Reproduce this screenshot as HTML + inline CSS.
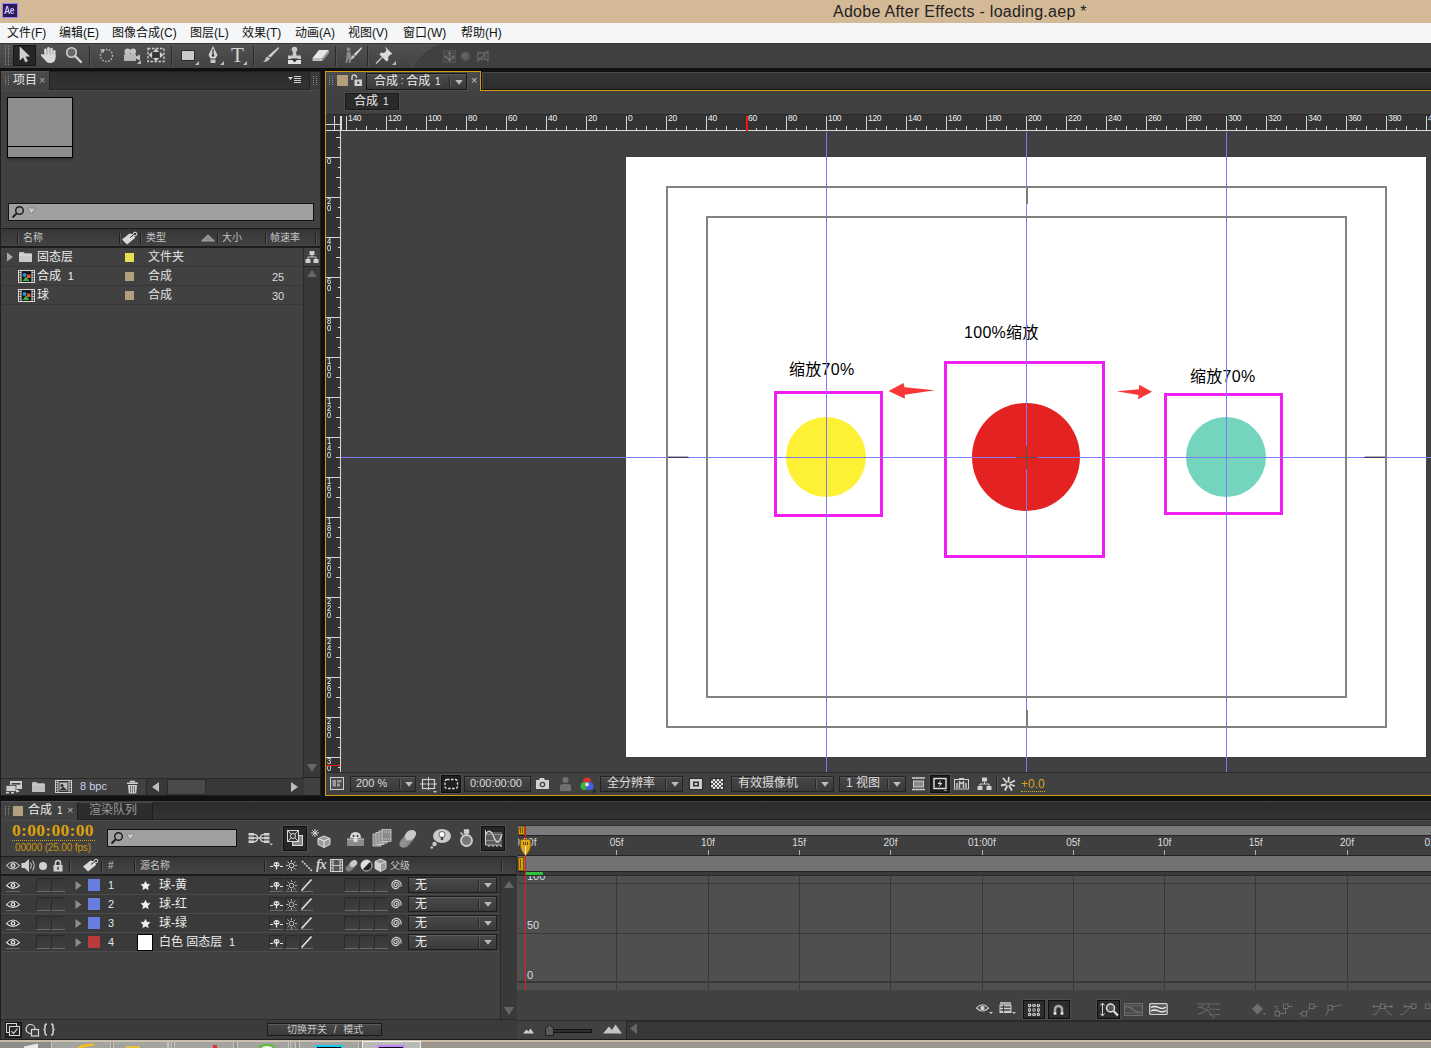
<!DOCTYPE html><html><head><meta charset="utf-8"><title>Adobe After Effects - loading.aep *</title><style>
*{box-sizing:border-box;margin:0;padding:0}
html,body{width:1431px;height:1048px;overflow:hidden;background:#111}
body{font-family:"Liberation Sans","Noto Sans CJK SC",sans-serif;font-size:12px;color:#d6d6d6;position:relative}
.a{position:absolute}
.t{position:absolute;white-space:nowrap;line-height:14px}
</style></head><body>
<div class="a" style="left:0px;top:0px;width:1431px;height:23px;background:#d4b997;"></div>
<div class="a" style="left:2px;top:3px;width:16px;height:15px;background:#2d1b59;border:1px solid #9f86ee;box-shadow:0 0 1px #b9a4ff"></div>
<div class="t" style="left:4px;top:4px;color:#cdbcff;font-size:10px;font-weight:bold;letter-spacing:-0.6px;line-height:13px;transform:scaleX(.88);transform-origin:0 0">Ae</div>
<div class="t" style="left:833px;top:3px;color:#222;font-size:16px;line-height:18px;letter-spacing:0.27px">Adobe After Effects - loading.aep *</div>
<div class="a" style="left:0px;top:23px;width:1431px;height:20px;background:#f5f6f7;"></div>
<div class="t" style="left:7px;top:26px;color:#111;font-size:12px;">文件(F)</div>
<div class="t" style="left:59px;top:26px;color:#111;font-size:12px;">编辑(E)</div>
<div class="t" style="left:112px;top:26px;color:#111;font-size:12px;">图像合成(C)</div>
<div class="t" style="left:190px;top:26px;color:#111;font-size:12px;">图层(L)</div>
<div class="t" style="left:242px;top:26px;color:#111;font-size:12px;">效果(T)</div>
<div class="t" style="left:295px;top:26px;color:#111;font-size:12px;">动画(A)</div>
<div class="t" style="left:348px;top:26px;color:#111;font-size:12px;">视图(V)</div>
<div class="t" style="left:403px;top:26px;color:#111;font-size:12px;">窗口(W)</div>
<div class="t" style="left:461px;top:26px;color:#111;font-size:12px;">帮助(H)</div>
<div class="a" style="left:0px;top:43px;width:1431px;height:25px;background:#404040;"></div>
<svg class="a" style="left:0;top:43px" width="460" height="25"><defs><linearGradient id="tbg" x1="0" y1="0" x2="0" y2="1"><stop offset="0" stop-color="#515151"/><stop offset="1" stop-color="#424242"/></linearGradient></defs><path d="M0 0H440Q422 6 411 25H0Z" fill="url(#tbg)"/><path d="M440 .5Q422 6.500 411 25" fill="none" stroke="#555" stroke-width="1"/></svg>
<div class="a" style="left:0px;top:43px;width:1431px;height:1px;background:#383838;"></div>
<div class="a" style="left:0px;top:68px;width:1431px;height:3px;background:#101010;"></div>
<div class="a" style="left:5px;top:45px;width:4px;height:21px;background:repeating-linear-gradient(#0000 0 1px,#8a8a8a 1px 2px);-webkit-mask:linear-gradient(90deg,#000 0 1px,#0000 1px 3px,#000 3px 4px);mask:linear-gradient(90deg,#000 0 1px,#0000 1px 3px,#000 3px 4px)"></div>
<div class="a" style="left:13px;top:45px;width:23px;height:21px;background:#262626;border:1px solid #151515"></div>
<svg class="a" style="left:18px;top:46px" width="12" height="17"><path d="M2 1v13l3.200-3l2.300 5l2-1l-2.300-4.800h4.300z" fill="#cfcfcf" stroke="#e8e8e8" stroke-width=".5"/></svg>
<svg class="a" style="left:40px;top:46px" width="17" height="18"><g fill="#d8d8d8"><rect x="4.200" y="2.500" width="2.600" height="9" rx="1.300"/><rect x="7.200" y="1" width="2.600" height="10" rx="1.300"/><rect x="10.200" y="1.800" width="2.600" height="9.500" rx="1.300"/><rect x="13.100" y="4" width="2.400" height="8" rx="1.200"/><path d="M4.200 8.500h11.300v3q0 5-5 5.500h-1.500q-2.500-.3-4-3L1.200 10q-.7-1.300.3-1.900t1.900.5l.8 1.200z"/></g></svg>
<svg class="a" style="left:65px;top:46px" width="18" height="18"><circle cx="6.500" cy="6.500" r="4.800" fill="#6a6a6a" stroke="#cfcfcf" stroke-width="1.600"/><path d="M10 10l6 6" stroke="#cfcfcf" stroke-width="2.400" stroke-linecap="round"/></svg>
<div class="a" style="left:89px;top:46px;width:1px;height:20px;background:#2a2a2a;"></div>
<div class="a" style="left:90px;top:46px;width:1px;height:20px;background:#555;"></div>
<svg class="a" style="left:98px;top:47px" width="17" height="16"><circle cx="8.500" cy="8.500" r="6" fill="none" stroke="#bdbdbd" stroke-width="1.400" stroke-dasharray="1.500 1.500"/><path d="M2 2.500l4.500-.5l-1 4z" fill="#bdbdbd"/></svg>
<svg class="a" style="left:122px;top:47px" width="20" height="18"><circle cx="5.500" cy="4.500" r="3" fill="#c4c4c4"/><circle cx="11" cy="4.500" r="3" fill="#c4c4c4"/><rect x="2" y="7" width="12" height="7" rx="1" fill="#b8b8b8"/><path d="M14 9.500l4-2v6l-4-2z" fill="#c4c4c4"/><path d="M19 13v4h-4z" fill="#bbb"/></svg>
<svg class="a" style="left:147px;top:47px" width="18" height="16"><rect x="1" y="1.500" width="16" height="13" fill="none" stroke="#cfcfcf" stroke-width="1.300" stroke-dasharray="2.500 1.500"/><path d="M9 1.500l-3 3.500h6zM9 14.500l-3-3.500h6zM1.500 8l3.500-3v6zM16.500 8l-3.500-3v6z" fill="#cfcfcf"/><rect x="6" y="5.500" width="6" height="5" fill="#333"/></svg>
<div class="a" style="left:171px;top:46px;width:1px;height:20px;background:#2a2a2a;"></div>
<div class="a" style="left:172px;top:46px;width:1px;height:20px;background:#555;"></div>
<svg class="a" style="left:180px;top:48px" width="20" height="18"><rect x="1.500" y="2.500" width="13" height="10" fill="#c9c9c9" stroke="#2a2a2a" stroke-width="1"/><path d="M19 13v4h-4z" fill="#bbb"/></svg>
<svg class="a" style="left:205px;top:45px" width="20" height="21"><path d="M8 1l4.500 9l-2 3.500h-5l-2-3.500z" fill="#d4d4d4"/><path d="M8 4v6" stroke="#333" stroke-width="1.200"/><circle cx="8" cy="10.500" r="1.200" fill="#333"/><rect x="5.500" y="14.500" width="5" height="3.500" fill="#c4c4c4"/><path d="M19 16v4h-4z" fill="#bbb"/></svg>
<div class="t" style="left:231px;top:44px;font-family:'Liberation Serif',serif;font-size:21px;line-height:22px;color:#d4d4d4">T</div>
<svg class="a" style="left:243px;top:61px" width="5" height="5"><path d="M4 0v4h-4z" fill="#bbb"/></svg>
<div class="a" style="left:253px;top:46px;width:1px;height:20px;background:#2a2a2a;"></div>
<div class="a" style="left:254px;top:46px;width:1px;height:20px;background:#555;"></div>
<svg class="a" style="left:262px;top:46px" width="18" height="18"><path d="M16.500 1q1 1 0 2l-8 8.500l-2.500-1.500z" fill="#d4d4d4"/><path d="M5.500 10.500l2.500 2q-2 3.500-7 3.500q3-2 2.500-4z" fill="#c4c4c4"/></svg>
<svg class="a" style="left:286px;top:46px" width="18" height="19"><circle cx="8.500" cy="3.500" r="2.800" fill="#c9c9c9"/><path d="M7 6h3l.5 3.500h4.500v3.500h-13v-3.500h4.500z" fill="#c9c9c9"/><path d="M2 14h13v4h-13z" fill="#e0e0e0"/><path d="M5 12.500h7l-3.500 4z" fill="#333"/></svg>
<svg class="a" style="left:311px;top:49px" width="19" height="14"><path d="M8 1h10l-6.500 8h-10z" fill="#e6e6e6"/><path d="M1.500 9h10v3h-10z" fill="#bdbdbd"/><path d="M11.500 9l6.500-8v3l-6.500 8z" fill="#9a9a9a"/></svg>
<div class="a" style="left:335px;top:46px;width:1px;height:20px;background:#2a2a2a;"></div>
<div class="a" style="left:336px;top:46px;width:1px;height:20px;background:#555;"></div>
<svg class="a" style="left:343px;top:46px" width="20" height="19"><circle cx="5.500" cy="3.500" r="2" fill="#8a8a8a"/><path d="M4 6h3.500l1 5l-1 6h-1.500l-.5-5l-1.500 5h-1.500l1-6z" fill="#8a8a8a"/><path d="M18.500 1q1 .8 0 2l-6 7l-2-1.500z" fill="#d4d4d4"/><path d="M10 9l2 1.500q-1.500 3-5 3q2-1.500 1.500-3z" fill="#c4c4c4"/></svg>
<div class="a" style="left:367px;top:46px;width:1px;height:20px;background:#2a2a2a;"></div>
<div class="a" style="left:368px;top:46px;width:1px;height:20px;background:#555;"></div>
<svg class="a" style="left:375px;top:46px" width="22" height="20"><path d="M9 1.500l7.500 7.500l-2 .5l-2.500 2.500l.5 3l-2 1.500l-7-7l1.500-2l3 .5l2.500-2.500z" fill="#d9d9d9" transform="translate(1,-1)"/><path d="M1 17.500l6-6" stroke="#cfcfcf" stroke-width="1.300"/><path d="M21 15v4h-4z" fill="#bbb"/></svg>
<div class="a" style="left:443px;top:50px;width:13px;height:13px;background:#484848;border:1px solid #525252"></div>
<svg class="a" style="left:444px;top:51px" width="11" height="11"><path d="M5.500 1.500v8M5.500 9.500L1.500 5.500M5.500 9.500l4-4" stroke="#707070" fill="none" stroke-width="1.100"/><path d="M5.500 0l-2 2.800h4zM0.500 4.500l.3 3l2.500-2.500zM10.500 4.500l-.3 3l-2.500-2.500zM5.500 11l-1.500-2h3z" fill="#707070"/></svg>
<div class="a" style="left:461px;top:52px;width:9px;height:9px;border-radius:50%;background:radial-gradient(circle at 40% 35%,#6a6a6a,#4a4a4a)"></div>
<svg class="a" style="left:476px;top:50px" width="13" height="13"><path d="M2 1v11M2 3h7v6h-7M9 3l3-2v10l-3-2M3 10l8-8" stroke="#666" fill="none" stroke-width="1.300"/></svg>
<div class="a" style="left:0px;top:71px;width:321px;height:725px;background:#1e1e1e;"></div>
<div class="a" style="left:1px;top:72px;width:319px;height:723px;background:#414141;"></div>
<div class="a" style="left:49px;top:72px;width:271px;height:18px;background:linear-gradient(#2b2b2b,#333);border-bottom:1px solid #242424;border-left:1px solid #222"></div>
<div class="a" style="left:1px;top:72px;width:48px;height:18px;background:linear-gradient(#4c4c4c,#414141);"></div>
<div class="a" style="left:1px;top:71px;width:48px;height:1px;background:#555;"></div>
<div class="a" style="left:1px;top:90px;width:319px;height:1px;background:#4a4a4a;"></div>
<div class="a" style="left:5px;top:75px;width:4px;height:11px;background:repeating-linear-gradient(#0000 0 1px,#8a8a8a 1px 2px);-webkit-mask:linear-gradient(90deg,#000 0 1px,#0000 1px 3px,#000 3px 4px);mask:linear-gradient(90deg,#000 0 1px,#0000 1px 3px,#000 3px 4px)"></div>
<div class="t" style="left:13px;top:73px;color:#e6e6e6;font-size:12px;line-height:15px">项目</div>
<div class="t" style="left:39px;top:73px;color:#a8a8a8;font-size:11px;line-height:15px">×</div>
<div class="a" style="left:309px;top:72px;width:1px;height:18px;background:#222;"></div>
<div class="a" style="left:310px;top:72px;width:10px;height:18px;background:#3a3a3a;"></div>
<svg class="a" style="left:288px;top:75px" width="14" height="10"><path d="M0 2h5l-2.500 3zM6 1h7v1h-7zM6 3h7v1h-7zM6 5h7v1h-7zM6 7h7v1h-7z" fill="#cfcfcf"/></svg>
<div class="a" style="left:313px;top:75px;width:4px;height:11px;background:repeating-linear-gradient(#0000 0 1px,#8a8a8a 1px 2px);-webkit-mask:linear-gradient(90deg,#000 0 1px,#0000 1px 3px,#000 3px 4px);mask:linear-gradient(90deg,#000 0 1px,#0000 1px 3px,#000 3px 4px)"></div>
<div class="a" style="left:7px;top:97px;width:66px;height:61px;background:#8e8e8e;border:1px solid #000;box-shadow:0 2px 2px #333"></div>
<div class="a" style="left:8px;top:146px;width:64px;height:1px;background:#000;"></div>
<div class="a" style="left:8px;top:203px;width:306px;height:18px;background:#a0a0a0;border:1px solid #111"></div>
<svg class="a" style="left:11px;top:205px" width="28" height="14"><circle cx="8.500" cy="5.500" r="3.800" fill="none" stroke="#1a1a1a" stroke-width="1.400"/><path d="M5.600 8.400L1.500 12.500" stroke="#1a1a1a" stroke-width="1.800"/><path d="M16.500 3h8l-4 6z" fill="#c8c8c8" stroke="#777" stroke-width=".7"/></svg>
<div class="a" style="left:1px;top:228px;width:319px;height:1px;background:#1c1c1c;"></div>
<div class="a" style="left:1px;top:229px;width:319px;height:18px;background:linear-gradient(#363636,#444);"></div>
<div class="a" style="left:1px;top:246px;width:319px;height:2px;background:#1c1c1c;"></div>
<div class="a" style="left:17px;top:233px;width:1px;height:11px;background:#1e1e1e;"></div>
<div class="a" style="left:18px;top:233px;width:1px;height:11px;background:#555;"></div>
<div class="a" style="left:119px;top:233px;width:1px;height:11px;background:#1e1e1e;"></div>
<div class="a" style="left:120px;top:233px;width:1px;height:11px;background:#555;"></div>
<div class="a" style="left:140px;top:233px;width:1px;height:11px;background:#1e1e1e;"></div>
<div class="a" style="left:141px;top:233px;width:1px;height:11px;background:#555;"></div>
<div class="a" style="left:217px;top:233px;width:1px;height:11px;background:#1e1e1e;"></div>
<div class="a" style="left:218px;top:233px;width:1px;height:11px;background:#555;"></div>
<div class="a" style="left:265px;top:233px;width:1px;height:11px;background:#1e1e1e;"></div>
<div class="a" style="left:266px;top:233px;width:1px;height:11px;background:#555;"></div>
<div class="a" style="left:315px;top:233px;width:1px;height:11px;background:#1e1e1e;"></div>
<div class="a" style="left:316px;top:233px;width:1px;height:11px;background:#555;"></div>
<div class="t" style="left:23px;top:231px;color:#c4c4c4;font-size:10px;line-height:13px">名称</div>
<div class="t" style="left:146px;top:231px;color:#c4c4c4;font-size:10px;line-height:13px">类型</div>
<div class="t" style="left:222px;top:231px;color:#c4c4c4;font-size:10px;line-height:13px">大小</div>
<div class="t" style="left:270px;top:231px;color:#c4c4c4;font-size:10px;line-height:13px">帧速率</div>
<svg class="a" style="left:121px;top:231px" width="17" height="14"><path d="M1 8.500L8.500 2.500L13 3.500L14 7L6 13.500z" fill="#d9d9d9"/><circle cx="14" cy="3" r="1.800" fill="none" stroke="#ddd" stroke-width="1"/><path d="M9 6.500l4-3" stroke="#333" stroke-width="1"/></svg>
<svg class="a" style="left:201px;top:234px" width="14" height="8"><path d="M0.500 7L7 0.800L13.500 7z" fill="#8c8c8c" stroke="#b8b8b8" stroke-width=".8"/></svg>
<div class="a" style="left:1px;top:266px;width:303px;height:1px;background:#373737;"></div>
<div class="a" style="left:1px;top:285px;width:303px;height:1px;background:#373737;"></div>
<div class="a" style="left:1px;top:304px;width:303px;height:1px;background:#373737;"></div>
<svg class="a" style="left:6px;top:252px" width="8" height="10"><path d="M1 0.500L7 5L1 9.500z" fill="#a8a8a8"/></svg>
<svg class="a" style="left:18px;top:251px" width="15" height="12"><path d="M1 2.200q0-1.200 1.200-1.200h3.300l1.200 1.300h6q1.300 0 1.300 1.300v7.400h-13z" fill="#c9c9c9"/><path d="M1 4h13" stroke="#e6e6e6" stroke-width=".8"/></svg>
<svg class="a" style="left:18px;top:270px" width="17" height="13"><rect x="0.500" y="0.500" width="16" height="12" fill="#222" stroke="#d8d8d8"/><path d="M3 0v13M14 0v13" stroke="#d8d8d8"/><path d="M0 2.500h3M0 5h3M0 7.500h3M0 10h3M14 2.500h3M14 5h3M14 7.500h3M14 10h3" stroke="#d8d8d8" stroke-width=".8"/><rect x="4" y="2" width="9" height="9" fill="#111"/><circle cx="6.500" cy="5" r="2" fill="#2c8fd0"/><rect x="9" y="4.500" width="3.500" height="3.500" fill="#e2572b"/><path d="M4.500 11l3.500-4.500l3.500 4.500z" fill="#38b545"/></svg>
<svg class="a" style="left:18px;top:289px" width="17" height="13"><rect x="0.500" y="0.500" width="16" height="12" fill="#222" stroke="#d8d8d8"/><path d="M3 0v13M14 0v13" stroke="#d8d8d8"/><path d="M0 2.500h3M0 5h3M0 7.500h3M0 10h3M14 2.500h3M14 5h3M14 7.500h3M14 10h3" stroke="#d8d8d8" stroke-width=".8"/><rect x="4" y="2" width="9" height="9" fill="#111"/><circle cx="6.500" cy="5" r="2" fill="#2c8fd0"/><rect x="9" y="4.500" width="3.500" height="3.500" fill="#e2572b"/><path d="M4.500 11l3.500-4.500l3.500 4.500z" fill="#38b545"/></svg>
<div class="t" style="left:37px;top:250px;color:#ececec;font-size:12px;line-height:15px">固态层</div>
<div class="t" style="left:37px;top:269px;color:#ececec;font-size:12px;line-height:15px">合成&nbsp; <span style="font-size:11px">1</span></div>
<div class="t" style="left:37px;top:288px;color:#ececec;font-size:12px;line-height:15px">球</div>
<div class="a" style="left:125px;top:253px;width:9px;height:9px;background:#e8dc52;"></div>
<div class="a" style="left:125px;top:272px;width:9px;height:9px;background:#b39e7d;"></div>
<div class="a" style="left:125px;top:291px;width:9px;height:9px;background:#b39e7d;"></div>
<div class="t" style="left:148px;top:250px;color:#e0e0e0;font-size:12px;line-height:15px">文件夹</div>
<div class="t" style="left:148px;top:269px;color:#e0e0e0;font-size:12px;line-height:15px">合成</div>
<div class="t" style="left:148px;top:288px;color:#e0e0e0;font-size:12px;line-height:15px">合成</div>
<div class="t" style="left:272px;top:270px;color:#dcdcdc;font-size:11px;line-height:14px">25</div>
<div class="t" style="left:272px;top:289px;color:#dcdcdc;font-size:11px;line-height:14px">30</div>
<div class="a" style="left:303px;top:248px;width:1px;height:530px;background:#2a2a2a;"></div>
<div class="a" style="left:304px;top:267px;width:16px;height:511px;background:#393939;"></div>
<div class="a" style="left:304px;top:266px;width:16px;height:1px;background:#222;"></div>
<div class="a" style="left:304px;top:777px;width:16px;height:1px;background:#222;"></div>
<svg class="a" style="left:305px;top:250px" width="14" height="14"><path d="M4.500 1h5v4h-5zM0.500 9h5v4h-5zM8.500 9h5v4h-5z" fill="#cfcfcf"/><path d="M7 5v2M3 9V7h8v2" stroke="#cfcfcf" fill="none"/></svg>
<svg class="a" style="left:307px;top:270px" width="10" height="7"><path d="M0 7L5 0L10 7z" fill="#666"/></svg>
<svg class="a" style="left:307px;top:764px" width="10" height="8"><path d="M0 0h10L5 8z" fill="#666"/></svg>
<div class="a" style="left:1px;top:778px;width:303px;height:1px;background:#2a2a2a;"></div>
<svg class="a" style="left:5px;top:780px" width="18" height="14"><rect x="5" y="1" width="12" height="8" fill="#cfcfcf"/><rect x="6.500" y="3" width="9" height="1.600" fill="#444"/><rect x="1" y="5.500" width="10" height="6" fill="#cfcfcf" stroke="#444" stroke-width=".8"/><path d="M11 9l4 2.500l-4 1z" fill="#cfcfcf"/><path d="M1 12h3v1.500h-3zM6 12h3v1.500h-3z" fill="#cfcfcf"/></svg>
<svg class="a" style="left:31px;top:781px" width="15" height="12"><path d="M1 2.200q0-1.200 1.200-1.200h3.300l1.200 1.300h6q1.300 0 1.300 1.300v7.400h-13z" fill="#bdbdbd"/><path d="M1 4h13" stroke="#d8d8d8" stroke-width=".8"/></svg>
<svg class="a" style="left:55px;top:780px" width="18" height="14"><rect x="0.500" y="0.500" width="16" height="12" fill="#333" stroke="#cfcfcf"/><path d="M3 0v13M14 0v13" stroke="#cfcfcf"/><path d="M0 2.500h3M0 5h3M0 7.500h3M0 10h3M14 2.500h3M14 5h3M14 7.500h3M14 10h3" stroke="#cfcfcf" stroke-width=".8"/><rect x="4.500" y="2.500" width="8" height="8" fill="#bbb"/><circle cx="7" cy="5.500" r="1.600" fill="#333"/><path d="M5 10l3-3.500l4 3.500z" fill="#333"/></svg>
<div class="t" style="left:80px;top:779px;color:#c9d3e8;font-size:11px;line-height:14px">8 bpc</div>
<svg class="a" style="left:126px;top:780px" width="13" height="14"><path d="M4 1.500h5M1 3.300h11" stroke="#cfcfcf" stroke-width="1.400"/><path d="M2 5h9l-.8 8.500h-7.400z" fill="#cfcfcf"/><path d="M4.500 6v6.500M6.500 6v6.500M8.500 6v6.500" stroke="#555" stroke-width=".8"/></svg>
<div class="a" style="left:146px;top:779px;width:158px;height:16px;background:#383838;border-left:1px solid #2a2a2a"></div>
<div class="a" style="left:167px;top:779px;width:39px;height:16px;background:#4a4a4a;border:1px solid #2c2c2c"></div>
<svg class="a" style="left:152px;top:782px" width="7" height="10"><path d="M7 0v10L0 5z" fill="#bdbdbd"/></svg>
<svg class="a" style="left:291px;top:782px" width="7" height="10"><path d="M0 0v10L7 5z" fill="#bdbdbd"/></svg>
<div class="a" style="left:325px;top:71px;width:1106px;height:725px;background:#414141;"></div>
<div class="a" style="left:326px;top:72px;width:154px;height:19px;background:linear-gradient(#4c4c4c,#414141);"></div>
<div class="a" style="left:481px;top:71px;width:950px;height:19px;background:#111;"></div>
<div class="a" style="left:482px;top:72px;width:949px;height:17px;background:linear-gradient(#343434,#2d2d2d);border-top:1px solid #4a4a4a;border-left:1px solid #4a4a4a"></div>
<div class="a" style="left:325px;top:71px;width:156px;height:1px;background:#d89a12;"></div>
<div class="a" style="left:325px;top:71px;width:1px;height:725px;background:#d89a12;"></div>
<div class="a" style="left:480px;top:71px;width:1px;height:20px;background:#d89a12;"></div>
<div class="a" style="left:480px;top:90px;width:951px;height:1px;background:#d89a12;"></div>
<div class="a" style="left:325px;top:795px;width:1106px;height:1px;background:#d89a12;"></div>
<div class="a" style="left:329px;top:75px;width:4px;height:11px;background:repeating-linear-gradient(#0000 0 1px,#8a8a8a 1px 2px);-webkit-mask:linear-gradient(90deg,#000 0 1px,#0000 1px 3px,#000 3px 4px);mask:linear-gradient(90deg,#000 0 1px,#0000 1px 3px,#000 3px 4px)"></div>
<div class="a" style="left:337px;top:75px;width:11px;height:11px;background:#b39e7d;"></div>
<svg class="a" style="left:350px;top:73px" width="13" height="14"><path d="M2 7V4.200q0-2.200 2.200-2.200t2.200 2.200V5" fill="none" stroke="#d0d0d0" stroke-width="1.500"/><rect x="4.500" y="6.500" width="7.500" height="6.500" fill="#d0d0d0"/><rect x="7.300" y="8.500" width="2" height="2.500" fill="#444"/></svg>
<div class="a" style="left:366px;top:73px;width:101px;height:17px;background:linear-gradient(#4a4a4a,#3a3a3a);border:1px solid #161616;box-shadow:inset 0 1px 0 #5a5a5a,1px 1px 0 #505050"></div>
<div class="t" style="left:374px;top:74px;color:#ececec;font-size:12px;line-height:15px">合成<span style="font-size:10px;position:relative;top:-1px"> : </span>合成</div>
<div class="t" style="left:435px;top:74px;color:#ececec;font-size:10px;line-height:15px">1</div>
<div class="a" style="left:449px;top:77px;width:1px;height:10px;background:#262626;"></div>
<div class="a" style="left:450px;top:77px;width:1px;height:10px;background:#5a5a5a;"></div>
<svg class="a" style="left:454px;top:79px" width="10" height="7"><path d="M1.200 1h7.600l-3.800 4.800z" fill="#bcbcbc"/></svg>
<div class="t" style="left:471px;top:73px;color:#c4c4c4;font-size:11px;line-height:15px">×</div>
<div class="a" style="left:345px;top:93px;width:54px;height:17px;background:#2a2a2a;border:1px solid #1a1a1a;box-shadow:0 0 0 1px #4c4c4c"></div>
<div class="t" style="left:354px;top:94px;color:#ececec;font-size:12px;line-height:15px">合成</div>
<div class="t" style="left:383px;top:94px;color:#ececec;font-size:10px;line-height:15px">1</div>
<div class="a" style="left:326px;top:772px;width:1105px;height:1px;background:#2a2a2a;"></div>
<svg class="a" style="left:330px;top:777px" width="15" height="14"><rect x="0.500" y="0.500" width="13" height="12" fill="#4a4a4a" stroke="#cfcfcf"/><rect x="2.500" y="3" width="3.500" height="6.500" fill="#999"/><rect x="7" y="3" width="4.500" height="2.500" fill="#999"/><rect x="7" y="6.500" width="3" height="3" fill="#999"/></svg>
<div class="a" style="left:350px;top:776px;width:66px;height:16px;background:linear-gradient(#474747,#393939);border:1px solid #232323;box-shadow:inset 0 1px 0 #595959"></div>
<div class="t" style="left:356px;top:776px;color:#dcdcdc;font-size:12px;line-height:15px"><span style="font-size:11px">200 %</span></div>
<div class="a" style="left:399px;top:779px;width:1px;height:10px;background:#262626;"></div>
<div class="a" style="left:400px;top:779px;width:1px;height:10px;background:#5a5a5a;"></div>
<svg class="a" style="left:404px;top:781px" width="10" height="7"><path d="M1.200 1h7.600l-3.800 4.800z" fill="#bcbcbc"/></svg>
<svg class="a" style="left:420px;top:777px" width="18" height="16"><rect x="2.500" y="2.500" width="12" height="9" fill="none" stroke="#d0d0d0" stroke-width="1.200"/><path d="M0 7h17M8.500 0v13" stroke="#d0d0d0" stroke-width="1"/><rect x="6" y="4.500" width="5" height="5" fill="#414141"/><path d="M8.500 5v4M6.500 7h4" stroke="#d0d0d0" stroke-width="1"/><path d="M13 14h4l-2 2z" fill="#ccc"/></svg>
<div class="a" style="left:441px;top:775px;width:20px;height:18px;background:#1f1f1f;border:1px solid #111;box-shadow:0 0 0 1px #505050"></div>
<svg class="a" style="left:444px;top:778px" width="15" height="12"><rect x="1" y="1.500" width="12.500" height="9" rx="2" fill="none" stroke="#e0e0e0" stroke-width="1.300" stroke-dasharray="2.500 1.500"/></svg>
<div class="a" style="left:464px;top:776px;width:67px;height:16px;background:linear-gradient(#474747,#393939);border:1px solid #232323;box-shadow:inset 0 1px 0 #595959"></div>
<div class="t" style="left:470px;top:776px;color:#dcdcdc;font-size:12px;line-height:15px"><span style="font-size:11px">0:00:00:00</span></div>
<svg class="a" style="left:535px;top:777px" width="15" height="13"><path d="M1 3h3l1-2h4l1 2h4v9h-13z" fill="#d0d0d0"/><circle cx="7.500" cy="7.500" r="2.800" fill="#444"/><circle cx="7.500" cy="7.500" r="1.500" fill="#d0d0d0"/></svg>
<svg class="a" style="left:559px;top:776px" width="13" height="16"><circle cx="6.500" cy="4" r="3" fill="#707070"/><path d="M1 15v-4.500q0-2.500 3-2.500h5q3 0 3 2.500v4.500z" fill="#707070"/></svg>
<svg class="a" style="left:579px;top:776px" width="17" height="17"><circle cx="8" cy="5.500" r="4" fill="#d93030"/><circle cx="5.500" cy="10" r="4" fill="#35b535"/><circle cx="10.500" cy="10" r="4" fill="#4060e0"/><circle cx="8" cy="8.500" r="2" fill="#ddd"/><path d="M16.500 12.500v4h-4z" fill="#222"/></svg>
<div class="a" style="left:600px;top:776px;width:83px;height:16px;background:linear-gradient(#474747,#393939);border:1px solid #232323;box-shadow:inset 0 1px 0 #595959"></div>
<div class="t" style="left:607px;top:776px;color:#dcdcdc;font-size:12px;line-height:15px">全分辨率</div>
<div class="a" style="left:665px;top:779px;width:1px;height:10px;background:#262626;"></div>
<div class="a" style="left:666px;top:779px;width:1px;height:10px;background:#5a5a5a;"></div>
<svg class="a" style="left:670px;top:781px" width="10" height="7"><path d="M1.200 1h7.600l-3.800 4.800z" fill="#bcbcbc"/></svg>
<svg class="a" style="left:689px;top:778px" width="14" height="12"><rect x="0.500" y="0.500" width="13" height="11" fill="#d0d0d0" stroke="#2a2a2a"/><rect x="4" y="3.500" width="6" height="5" fill="#333"/><rect x="5.500" y="5" width="3" height="2" fill="#d0d0d0"/></svg>
<div class="a" style="left:710px;top:778px;width:14px;height:12px;background:repeating-conic-gradient(#e8e8e8 0 25%,#555 0 50%) 0 0/4px 4px;border:1px solid #2a2a2a"></div>
<div class="a" style="left:731px;top:776px;width:103px;height:16px;background:linear-gradient(#474747,#393939);border:1px solid #232323;box-shadow:inset 0 1px 0 #595959"></div>
<div class="t" style="left:738px;top:776px;color:#dcdcdc;font-size:12px;line-height:15px">有效摄像机</div>
<div class="a" style="left:815px;top:779px;width:1px;height:10px;background:#262626;"></div>
<div class="a" style="left:816px;top:779px;width:1px;height:10px;background:#5a5a5a;"></div>
<svg class="a" style="left:820px;top:781px" width="10" height="7"><path d="M1.200 1h7.600l-3.800 4.800z" fill="#bcbcbc"/></svg>
<div class="a" style="left:839px;top:776px;width:67px;height:16px;background:linear-gradient(#474747,#393939);border:1px solid #232323;box-shadow:inset 0 1px 0 #595959"></div>
<div class="t" style="left:846px;top:776px;color:#dcdcdc;font-size:12px;line-height:15px">1 视图</div>
<div class="a" style="left:887px;top:779px;width:1px;height:10px;background:#262626;"></div>
<div class="a" style="left:888px;top:779px;width:1px;height:10px;background:#5a5a5a;"></div>
<svg class="a" style="left:892px;top:781px" width="10" height="7"><path d="M1.200 1h7.600l-3.800 4.800z" fill="#bcbcbc"/></svg>
<svg class="a" style="left:912px;top:777px" width="14" height="14"><path d="M0 1h13M0 12.500h13" stroke="#d0d0d0" stroke-width="1.400"/><rect x="1.500" y="4" width="10" height="6" fill="#8a8a8a" stroke="#d0d0d0"/></svg>
<div class="a" style="left:930px;top:775px;width:20px;height:18px;background:#1f1f1f;border:1px solid #111;box-shadow:0 0 0 1px #505050"></div>
<svg class="a" style="left:933px;top:777px" width="15" height="14"><rect x="1" y="1.500" width="12" height="10" fill="none" stroke="#e0e0e0" stroke-width="1.400"/><path d="M8 3l-3.500 4h2.500l-1.500 3.500l4-4.500h-2.500z" fill="#e0e0e0"/><path d="M11 13h3l-1.500 1.500z" fill="#ccc"/></svg>
<svg class="a" style="left:954px;top:777px" width="15" height="13"><rect x="0.500" y="2.500" width="14" height="9.500" fill="none" stroke="#d0d0d0"/><path d="M5 1h5v2h-5z" fill="#d0d0d0"/><path d="M3 11V6M5.500 11V5l2 1.500l2-1.500v6M12 11V6" stroke="#d0d0d0" stroke-width="1.400" fill="none"/></svg>
<svg class="a" style="left:977px;top:777px" width="15" height="14"><path d="M5 0.500h5v4h-5zM0.500 9h5v4h-5zM9.500 9h5v4h-5z" fill="#d0d0d0"/><path d="M7.500 4.500v2.500M3 9V7h9v2" stroke="#d0d0d0" fill="none"/></svg>
<div class="a" style="left:996px;top:776px;width:1px;height:16px;background:#262626;"></div>
<div class="a" style="left:997px;top:776px;width:1px;height:16px;background:#555;"></div>
<svg class="a" style="left:1000px;top:776px" width="16" height="16"><g stroke="#d8d8d8" stroke-width="1.800" fill="none"><path d="M8 8L3 2M8 8l7-3.500M8 8l4 6.500M8 8L1 9.500M8 8l1-7M8 8l-3 6.500M8 8l7 2"/></g><circle cx="8" cy="8" r="1.800" fill="#414141"/></svg>
<div class="t" style="left:1021px;top:777px;color:#d9a520;font-size:12px;line-height:14px;border-bottom:1px dotted #d9a520;height:15px">+0.0</div>
<div class="a" style="left:626px;top:157px;width:800px;height:600px;background:#ffffff;"></div>
<div class="a" style="left:786px;top:417px;width:80px;height:80px;border-radius:50%;background:#fdf035"></div>
<div class="a" style="left:972px;top:403px;width:108px;height:108px;border-radius:50%;background:#e52222"></div>
<div class="a" style="left:1186px;top:417px;width:80px;height:80px;border-radius:50%;background:#74d4be"></div>
<div class="a" style="left:774px;top:391px;width:109px;height:126px;border:3px solid #f01ef0"></div>
<div class="a" style="left:944px;top:361px;width:161px;height:197px;border:3px solid #f01ef0"></div>
<div class="a" style="left:1164px;top:393px;width:119px;height:122px;border:3px solid #f01ef0"></div>
<div class="t" style="left:789px;top:360px;color:#000;font-size:16px;line-height:20px;letter-spacing:0.3px">缩放70%</div>
<div class="t" style="left:964px;top:323px;color:#000;font-size:16px;line-height:20px;letter-spacing:0.3px">100%缩放</div>
<div class="t" style="left:1190px;top:367px;color:#000;font-size:16px;line-height:20px;letter-spacing:0.3px">缩放70%</div>
<svg class="a" style="left:880px;top:375px" width="290" height="32" viewBox="880 375 290 32"><path d="M888.5 391 L903.5 383 L904.5 387.3 L935 390.2 L904.8 394.8 L904.8 398.8 Z" fill="#f83737"/><path d="M1152 391.8 L1139.2 384.7 L1139 389.2 L1116.5 391.2 L1138.6 395 L1138 399.2 Z" fill="#f83737"/></svg>
<div class="a" style="left:826px;top:132px;width:1px;height:640px;background:#7d7dfc;"></div>
<div class="a" style="left:1026px;top:132px;width:1px;height:640px;background:#7d7dfc;"></div>
<div class="a" style="left:1226px;top:132px;width:1px;height:640px;background:#7d7dfc;"></div>
<div class="a" style="left:341px;top:457px;width:1090px;height:1px;background:#7d7dfc;"></div>
<div class="a" style="left:1016px;top:457px;width:22px;height:1px;background:#555;"></div>
<div class="a" style="left:1026px;top:446px;width:1px;height:23px;background:#555;"></div>
<div class="a" style="left:666px;top:186px;width:721px;height:542px;border:2px solid #828282"></div>
<div class="a" style="left:706px;top:216px;width:641px;height:482px;border:2px solid #828282"></div>
<div class="a" style="left:1026px;top:188px;width:2px;height:16px;background:#7c7c7c;"></div>
<div class="a" style="left:1026px;top:710px;width:2px;height:16px;background:#7c7c7c;"></div>
<div class="a" style="left:668px;top:456px;width:20px;height:1px;background:#b4b4ac;"></div>
<div class="a" style="left:668px;top:457px;width:21px;height:1px;background:#3a3a78;"></div>
<div class="a" style="left:1365px;top:456px;width:20px;height:1px;background:#b4b4ac;"></div>
<div class="a" style="left:1364px;top:457px;width:21px;height:1px;background:#3a3a78;"></div>
<div class="a" style="left:326px;top:115px;width:1105px;height:16px;background:#333333;"></div>
<div class="a" style="left:326px;top:131px;width:15px;height:641px;background:#333333;"></div>
<div class="a" style="left:326px;top:114px;width:1105px;height:1px;background:#2a2a2a;"></div>
<svg class="a" style="left:0;top:0" width="1431" height="780" shape-rendering="crispEdges"><path fill="#d8d8d8" d="M346 116h1v15h-1zM356 128h1v3h-1zM366 126h1v5h-1zM376 128h1v3h-1zM386 116h1v15h-1zM396 128h1v3h-1zM406 126h1v5h-1zM416 128h1v3h-1zM426 116h1v15h-1zM436 128h1v3h-1zM446 126h1v5h-1zM456 128h1v3h-1zM466 116h1v15h-1zM476 128h1v3h-1zM486 126h1v5h-1zM496 128h1v3h-1zM506 116h1v15h-1zM516 128h1v3h-1zM526 126h1v5h-1zM536 128h1v3h-1zM546 116h1v15h-1zM556 128h1v3h-1zM566 126h1v5h-1zM576 128h1v3h-1zM586 116h1v15h-1zM596 128h1v3h-1zM606 126h1v5h-1zM616 128h1v3h-1zM626 116h1v15h-1zM636 128h1v3h-1zM646 126h1v5h-1zM656 128h1v3h-1zM666 116h1v15h-1zM676 128h1v3h-1zM686 126h1v5h-1zM696 128h1v3h-1zM706 116h1v15h-1zM716 128h1v3h-1zM726 126h1v5h-1zM736 128h1v3h-1zM746 116h1v15h-1zM756 128h1v3h-1zM766 126h1v5h-1zM776 128h1v3h-1zM786 116h1v15h-1zM796 128h1v3h-1zM806 126h1v5h-1zM816 128h1v3h-1zM826 116h1v15h-1zM836 128h1v3h-1zM846 126h1v5h-1zM856 128h1v3h-1zM866 116h1v15h-1zM876 128h1v3h-1zM886 126h1v5h-1zM896 128h1v3h-1zM906 116h1v15h-1zM916 128h1v3h-1zM926 126h1v5h-1zM936 128h1v3h-1zM946 116h1v15h-1zM956 128h1v3h-1zM966 126h1v5h-1zM976 128h1v3h-1zM986 116h1v15h-1zM996 128h1v3h-1zM1006 126h1v5h-1zM1016 128h1v3h-1zM1026 116h1v15h-1zM1036 128h1v3h-1zM1046 126h1v5h-1zM1056 128h1v3h-1zM1066 116h1v15h-1zM1076 128h1v3h-1zM1086 126h1v5h-1zM1096 128h1v3h-1zM1106 116h1v15h-1zM1116 128h1v3h-1zM1126 126h1v5h-1zM1136 128h1v3h-1zM1146 116h1v15h-1zM1156 128h1v3h-1zM1166 126h1v5h-1zM1176 128h1v3h-1zM1186 116h1v15h-1zM1196 128h1v3h-1zM1206 126h1v5h-1zM1216 128h1v3h-1zM1226 116h1v15h-1zM1236 128h1v3h-1zM1246 126h1v5h-1zM1256 128h1v3h-1zM1266 116h1v15h-1zM1276 128h1v3h-1zM1286 126h1v5h-1zM1296 128h1v3h-1zM1306 116h1v15h-1zM1316 128h1v3h-1zM1326 126h1v5h-1zM1336 128h1v3h-1zM1346 116h1v15h-1zM1356 128h1v3h-1zM1366 126h1v5h-1zM1376 128h1v3h-1zM1386 116h1v15h-1zM1396 128h1v3h-1zM1406 126h1v5h-1zM1416 128h1v3h-1zM1426 116h1v15h-1zM336 137h4v1h-4zM338 147h2v1h-2zM326 157h14v1h-14zM338 167h2v1h-2zM336 177h4v1h-4zM338 187h2v1h-2zM326 197h14v1h-14zM338 207h2v1h-2zM336 217h4v1h-4zM338 227h2v1h-2zM326 237h14v1h-14zM338 247h2v1h-2zM336 257h4v1h-4zM338 267h2v1h-2zM326 277h14v1h-14zM338 287h2v1h-2zM336 297h4v1h-4zM338 307h2v1h-2zM326 317h14v1h-14zM338 327h2v1h-2zM336 337h4v1h-4zM338 347h2v1h-2zM326 357h14v1h-14zM338 367h2v1h-2zM336 377h4v1h-4zM338 387h2v1h-2zM326 397h14v1h-14zM338 407h2v1h-2zM336 417h4v1h-4zM338 427h2v1h-2zM326 437h14v1h-14zM338 447h2v1h-2zM336 457h4v1h-4zM338 467h2v1h-2zM326 477h14v1h-14zM338 487h2v1h-2zM336 497h4v1h-4zM338 507h2v1h-2zM326 517h14v1h-14zM338 527h2v1h-2zM336 537h4v1h-4zM338 547h2v1h-2zM326 557h14v1h-14zM338 567h2v1h-2zM336 577h4v1h-4zM338 587h2v1h-2zM326 597h14v1h-14zM338 607h2v1h-2zM336 617h4v1h-4zM338 627h2v1h-2zM326 637h14v1h-14zM338 647h2v1h-2zM336 657h4v1h-4zM338 667h2v1h-2zM326 677h14v1h-14zM338 687h2v1h-2zM336 697h4v1h-4zM338 707h2v1h-2zM326 717h14v1h-14zM338 727h2v1h-2zM336 737h4v1h-4zM338 747h2v1h-2zM326 757h14v1h-14zM338 767h2v1h-2zM326 130h1105v1h-1105zM340 116h2v15h-2zM340 131h1v641h-1zM326 124h14v1h-14zM334 116h1v15h-1z"/></svg>
<div class="t" style="left:348px;top:114px;color:#f0f0f0;font-size:8.5px;line-height:9px;letter-spacing:-0.35px">140</div>
<div class="t" style="left:388px;top:114px;color:#f0f0f0;font-size:8.5px;line-height:9px;letter-spacing:-0.35px">120</div>
<div class="t" style="left:428px;top:114px;color:#f0f0f0;font-size:8.5px;line-height:9px;letter-spacing:-0.35px">100</div>
<div class="t" style="left:468px;top:114px;color:#f0f0f0;font-size:8.5px;line-height:9px;letter-spacing:-0.35px">80</div>
<div class="t" style="left:508px;top:114px;color:#f0f0f0;font-size:8.5px;line-height:9px;letter-spacing:-0.35px">60</div>
<div class="t" style="left:548px;top:114px;color:#f0f0f0;font-size:8.5px;line-height:9px;letter-spacing:-0.35px">40</div>
<div class="t" style="left:588px;top:114px;color:#f0f0f0;font-size:8.5px;line-height:9px;letter-spacing:-0.35px">20</div>
<div class="t" style="left:628px;top:114px;color:#f0f0f0;font-size:8.5px;line-height:9px;letter-spacing:-0.35px">0</div>
<div class="t" style="left:668px;top:114px;color:#f0f0f0;font-size:8.5px;line-height:9px;letter-spacing:-0.35px">20</div>
<div class="t" style="left:708px;top:114px;color:#f0f0f0;font-size:8.5px;line-height:9px;letter-spacing:-0.35px">40</div>
<div class="t" style="left:748px;top:114px;color:#f0f0f0;font-size:8.5px;line-height:9px;letter-spacing:-0.35px">60</div>
<div class="t" style="left:788px;top:114px;color:#f0f0f0;font-size:8.5px;line-height:9px;letter-spacing:-0.35px">80</div>
<div class="t" style="left:828px;top:114px;color:#f0f0f0;font-size:8.5px;line-height:9px;letter-spacing:-0.35px">100</div>
<div class="t" style="left:868px;top:114px;color:#f0f0f0;font-size:8.5px;line-height:9px;letter-spacing:-0.35px">120</div>
<div class="t" style="left:908px;top:114px;color:#f0f0f0;font-size:8.5px;line-height:9px;letter-spacing:-0.35px">140</div>
<div class="t" style="left:948px;top:114px;color:#f0f0f0;font-size:8.5px;line-height:9px;letter-spacing:-0.35px">160</div>
<div class="t" style="left:988px;top:114px;color:#f0f0f0;font-size:8.5px;line-height:9px;letter-spacing:-0.35px">180</div>
<div class="t" style="left:1028px;top:114px;color:#f0f0f0;font-size:8.5px;line-height:9px;letter-spacing:-0.35px">200</div>
<div class="t" style="left:1068px;top:114px;color:#f0f0f0;font-size:8.5px;line-height:9px;letter-spacing:-0.35px">220</div>
<div class="t" style="left:1108px;top:114px;color:#f0f0f0;font-size:8.5px;line-height:9px;letter-spacing:-0.35px">240</div>
<div class="t" style="left:1148px;top:114px;color:#f0f0f0;font-size:8.5px;line-height:9px;letter-spacing:-0.35px">260</div>
<div class="t" style="left:1188px;top:114px;color:#f0f0f0;font-size:8.5px;line-height:9px;letter-spacing:-0.35px">280</div>
<div class="t" style="left:1228px;top:114px;color:#f0f0f0;font-size:8.5px;line-height:9px;letter-spacing:-0.35px">300</div>
<div class="t" style="left:1268px;top:114px;color:#f0f0f0;font-size:8.5px;line-height:9px;letter-spacing:-0.35px">320</div>
<div class="t" style="left:1308px;top:114px;color:#f0f0f0;font-size:8.5px;line-height:9px;letter-spacing:-0.35px">340</div>
<div class="t" style="left:1348px;top:114px;color:#f0f0f0;font-size:8.5px;line-height:9px;letter-spacing:-0.35px">360</div>
<div class="t" style="left:1388px;top:114px;color:#f0f0f0;font-size:8.5px;line-height:9px;letter-spacing:-0.35px">380</div>
<div class="t" style="left:1428px;top:114px;color:#f0f0f0;font-size:8.5px;line-height:9px;letter-spacing:-0.35px">400</div>
<div class="t" style="left:327px;top:158px;color:#f0f0f0;font-size:8.5px;line-height:7px;letter-spacing:0;height:40px;overflow:hidden;transform:scaleX(.9);transform-origin:0 0">0</div>
<div class="t" style="left:327px;top:198px;color:#f0f0f0;font-size:8.5px;line-height:7px;letter-spacing:0;height:40px;overflow:hidden;transform:scaleX(.9);transform-origin:0 0">2<br>0</div>
<div class="t" style="left:327px;top:238px;color:#f0f0f0;font-size:8.5px;line-height:7px;letter-spacing:0;height:40px;overflow:hidden;transform:scaleX(.9);transform-origin:0 0">4<br>0</div>
<div class="t" style="left:327px;top:278px;color:#f0f0f0;font-size:8.5px;line-height:7px;letter-spacing:0;height:40px;overflow:hidden;transform:scaleX(.9);transform-origin:0 0">6<br>0</div>
<div class="t" style="left:327px;top:318px;color:#f0f0f0;font-size:8.5px;line-height:7px;letter-spacing:0;height:40px;overflow:hidden;transform:scaleX(.9);transform-origin:0 0">8<br>0</div>
<div class="t" style="left:327px;top:358px;color:#f0f0f0;font-size:8.5px;line-height:7px;letter-spacing:0;height:40px;overflow:hidden;transform:scaleX(.9);transform-origin:0 0">1<br>0<br>0</div>
<div class="t" style="left:327px;top:398px;color:#f0f0f0;font-size:8.5px;line-height:7px;letter-spacing:0;height:40px;overflow:hidden;transform:scaleX(.9);transform-origin:0 0">1<br>2<br>0</div>
<div class="t" style="left:327px;top:438px;color:#f0f0f0;font-size:8.5px;line-height:7px;letter-spacing:0;height:40px;overflow:hidden;transform:scaleX(.9);transform-origin:0 0">1<br>4<br>0</div>
<div class="t" style="left:327px;top:478px;color:#f0f0f0;font-size:8.5px;line-height:7px;letter-spacing:0;height:40px;overflow:hidden;transform:scaleX(.9);transform-origin:0 0">1<br>6<br>0</div>
<div class="t" style="left:327px;top:518px;color:#f0f0f0;font-size:8.5px;line-height:7px;letter-spacing:0;height:40px;overflow:hidden;transform:scaleX(.9);transform-origin:0 0">1<br>8<br>0</div>
<div class="t" style="left:327px;top:558px;color:#f0f0f0;font-size:8.5px;line-height:7px;letter-spacing:0;height:40px;overflow:hidden;transform:scaleX(.9);transform-origin:0 0">2<br>0<br>0</div>
<div class="t" style="left:327px;top:598px;color:#f0f0f0;font-size:8.5px;line-height:7px;letter-spacing:0;height:40px;overflow:hidden;transform:scaleX(.9);transform-origin:0 0">2<br>2<br>0</div>
<div class="t" style="left:327px;top:638px;color:#f0f0f0;font-size:8.5px;line-height:7px;letter-spacing:0;height:40px;overflow:hidden;transform:scaleX(.9);transform-origin:0 0">2<br>4<br>0</div>
<div class="t" style="left:327px;top:678px;color:#f0f0f0;font-size:8.5px;line-height:7px;letter-spacing:0;height:40px;overflow:hidden;transform:scaleX(.9);transform-origin:0 0">2<br>6<br>0</div>
<div class="t" style="left:327px;top:718px;color:#f0f0f0;font-size:8.5px;line-height:7px;letter-spacing:0;height:40px;overflow:hidden;transform:scaleX(.9);transform-origin:0 0">2<br>8<br>0</div>
<div class="t" style="left:327px;top:758px;color:#f0f0f0;font-size:8.5px;line-height:7px;letter-spacing:0;height:14px;overflow:hidden;transform:scaleX(.9);transform-origin:0 0">3<br>0<br>0</div>
<div class="a" style="left:746px;top:116px;width:2px;height:15px;background:#ff1010;"></div>
<div class="a" style="left:326px;top:765px;width:14px;height:1px;background:#ff1010;"></div>
<div class="a" style="left:0px;top:801px;width:1431px;height:239px;background:#1e1e1e;"></div>
<div class="a" style="left:1px;top:801px;width:1430px;height:239px;background:#414141;"></div>
<div class="a" style="left:153px;top:802px;width:1278px;height:18px;background:linear-gradient(#2b2b2b,#333);border-bottom:1px solid #222"></div>
<div class="a" style="left:1px;top:801px;width:77px;height:1px;background:#555;"></div>
<div class="a" style="left:1px;top:820px;width:1430px;height:1px;background:#4a4a4a;"></div>
<div class="a" style="left:5px;top:805px;width:4px;height:11px;background:repeating-linear-gradient(#0000 0 1px,#8a8a8a 1px 2px);-webkit-mask:linear-gradient(90deg,#000 0 1px,#0000 1px 3px,#000 3px 4px);mask:linear-gradient(90deg,#000 0 1px,#0000 1px 3px,#000 3px 4px)"></div>
<div class="a" style="left:13px;top:806px;width:10px;height:10px;background:#b39e7d;"></div>
<div class="t" style="left:28px;top:803px;color:#ececec;font-size:12px;line-height:15px">合成</div>
<div class="t" style="left:57px;top:803px;color:#ececec;font-size:10px;line-height:15px">1</div>
<div class="t" style="left:67px;top:803px;color:#b4b4b4;font-size:11px;line-height:15px">×</div>
<div class="a" style="left:77px;top:802px;width:76px;height:18px;background:#2d2d2d;border:1px solid #1c1c1c;border-top:1px solid #4a4a4a;border-bottom:1px solid #222"></div>
<div class="t" style="left:89px;top:803px;color:#9c9c9c;font-size:12px;line-height:15px">渲染队列</div>
<div class="t" style="left:12px;top:821px;font-family:'Liberation Serif',serif;font-weight:bold;font-size:17.5px;line-height:19px;color:#d9a010;letter-spacing:0.3px;transform-origin:0 0;transform:scaleX(1.0)">0:00:00:00</div>
<div class="a" style="left:12px;top:840px;width:83px;height:1px;background:repeating-linear-gradient(90deg,#d9a010 0 1px,#0000 1px 2px)"></div>
<div class="t" style="left:15px;top:842px;color:#c8960f;font-size:10px;line-height:11px;letter-spacing:-0.15px">00000 (25.00 fps)</div>
<div class="a" style="left:107px;top:829px;width:130px;height:18px;background:#a0a0a0;border:1px solid #111"></div>
<svg class="a" style="left:110px;top:831px" width="28" height="14"><circle cx="8.500" cy="5.500" r="3.800" fill="none" stroke="#1a1a1a" stroke-width="1.400"/><path d="M5.600 8.400L1.500 12.500" stroke="#1a1a1a" stroke-width="1.800"/><path d="M16.500 3h8l-4 6z" fill="#c8c8c8" stroke="#777" stroke-width=".7"/></svg>
<svg class="a" style="left:248px;top:832px" width="25" height="14"><g fill="#cfcfcf"><rect x="0.500" y="1" width="5.500" height="2.600"/><rect x="0.500" y="4.700" width="5.500" height="2.600"/><rect x="0.500" y="8.400" width="5.500" height="2.600"/><rect x="16" y="1" width="5.500" height="2.600"/><rect x="16" y="4.700" width="5.500" height="2.600"/><rect x="16" y="8.400" width="5.500" height="2.600"/></g><path d="M6 2.300q3 0 4 3.700q-1 3.700-4 3.700M6 6h10M16 2.300q-3 0-4 3.700q1 3.700 4 3.700" stroke="#cfcfcf" fill="none" stroke-width="1.300"/><path d="M21.500 11.500h3.500l-1.750 2z" fill="#ccc"/></svg>
<div class="a" style="left:283px;top:826px;width:24px;height:25px;background:#262626;border:1px solid #111;box-shadow:0 0 0 1px #505050"></div>
<svg class="a" style="left:286px;top:829px" width="19" height="19"><rect x="6.500" y="6.500" width="10" height="10" fill="#8a8a8a" stroke="#d8d8d8"/><rect x="1.500" y="1.500" width="11" height="11" fill="#333" stroke="#d8d8d8"/><path d="M1.500 1.500l11 11M12.500 1.500l-11 11" stroke="#d8d8d8" stroke-width=".9"/><circle cx="7" cy="7" r="2.500" fill="#333" stroke="#d8d8d8"/></svg>
<svg class="a" style="left:310px;top:828px" width="21" height="21"><path d="M5 1v8M1 5h8M2.200 2.200l5.600 5.600M7.800 2.200l-5.600 5.600" stroke="#d8d8d8" stroke-width="1"/><path d="M14 8l6 2.500v6l-6 3l-6-3v-6z" fill="#9a9a9a" stroke="#d8d8d8" stroke-width="1"/><path d="M8 10.500l6 2.500l6-2.500M14 13v6.500" stroke="#e8e8e8" fill="none"/></svg>
<svg class="a" style="left:346px;top:830px" width="19" height="17"><path d="M1 9h17v7h-17z" fill="#8a8a8a"/><path d="M1 9h17" stroke="#cfcfcf"/><path d="M4 8q0-6 5.500-6t5.500 6h-3.500v4h-4v-4z" fill="#d8d8d8"/><circle cx="7.500" cy="6" r="1" fill="#333"/><circle cx="11.500" cy="6" r="1" fill="#333"/></svg>
<svg class="a" style="left:372px;top:829px" width="20" height="19"><g fill="#8a8a8a" stroke="#cfcfcf" stroke-width=".8"><rect x="1" y="5" width="8" height="12"/><rect x="4" y="3.500" width="8" height="12"/><rect x="7" y="2" width="8" height="12"/><rect x="10" y="0.500" width="9" height="12"/></g><path d="M10 3h9M10 10h9" stroke="#cfcfcf" stroke-dasharray="1 1"/></svg>
<svg class="a" style="left:398px;top:829px" width="19" height="19"><g fill="#9a9a9a" stroke="#6a6a6a" stroke-width=".6"><ellipse cx="7" cy="13.500" rx="6" ry="4.500" transform="rotate(-35 7 13.500)"/><ellipse cx="9" cy="11" rx="6" ry="4.500" transform="rotate(-35 9 11)"/><ellipse cx="11" cy="8.500" rx="6" ry="4.500" transform="rotate(-35 11 8.500)"/></g><ellipse cx="12.500" cy="6" rx="6" ry="4.500" transform="rotate(-35 12.500 6)" fill="#c9c9c9"/></svg>
<svg class="a" style="left:430px;top:828px" width="22" height="22"><ellipse cx="12" cy="8" rx="9" ry="7" fill="#c9c9c9"/><circle cx="4.500" cy="16" r="2.200" fill="#c9c9c9"/><circle cx="1.800" cy="19.500" r="1.300" fill="#c9c9c9"/><circle cx="12" cy="6.500" r="3" fill="#fff" stroke="#444" stroke-width=".8"/><path d="M10.800 9h2.400v3h-2.400z" fill="#444"/></svg>
<svg class="a" style="left:459px;top:829px" width="15" height="19"><circle cx="7.500" cy="11.500" r="5.500" fill="#777" stroke="#cfcfcf" stroke-width="1.800"/><path d="M5.500 1h4v3h-4zM7.500 4v2M1.500 3.500l2.500 2.500" stroke="#cfcfcf" stroke-width="1.400" fill="#cfcfcf"/></svg>
<div class="a" style="left:481px;top:826px;width:24px;height:25px;background:#262626;border:1px solid #111;box-shadow:0 0 0 1px #505050"></div>
<svg class="a" style="left:484px;top:829px" width="19" height="19"><rect x="2" y="3" width="16" height="12" fill="#5c5c5c"/><path d="M1.500 1v15h16" stroke="#d8d8d8" fill="none"/><path d="M2 5q4-7 8 3.500t8-3.500" stroke="#d8d8d8" fill="none" stroke-width="1.300"/><path d="M2 5.500h16M2 11.500h16" stroke="#9a9a9a" stroke-width=".8"/><path d="M5 16v2M9 16v2M13 16v2M17 16v2" stroke="#d8d8d8"/></svg>
<div class="a" style="left:1px;top:856px;width:516px;height:1px;background:#1c1c1c;"></div>
<div class="a" style="left:1px;top:857px;width:516px;height:17px;background:linear-gradient(#363636,#444);"></div>
<div class="a" style="left:1px;top:874px;width:516px;height:2px;background:#1c1c1c;"></div>
<div class="a" style="left:69px;top:861px;width:1px;height:11px;background:#1e1e1e;"></div>
<div class="a" style="left:70px;top:861px;width:1px;height:11px;background:#555;"></div>
<div class="a" style="left:101px;top:861px;width:1px;height:11px;background:#1e1e1e;"></div>
<div class="a" style="left:102px;top:861px;width:1px;height:11px;background:#555;"></div>
<div class="a" style="left:134px;top:861px;width:1px;height:11px;background:#1e1e1e;"></div>
<div class="a" style="left:135px;top:861px;width:1px;height:11px;background:#555;"></div>
<div class="a" style="left:264px;top:861px;width:1px;height:11px;background:#1e1e1e;"></div>
<div class="a" style="left:265px;top:861px;width:1px;height:11px;background:#555;"></div>
<div class="a" style="left:501px;top:861px;width:1px;height:11px;background:#1e1e1e;"></div>
<div class="a" style="left:502px;top:861px;width:1px;height:11px;background:#555;"></div>
<svg class="a" style="left:6px;top:859px" width="15" height="13"><path d="M0.500 6.500q6.500-7 13 0q-6.500 7-13 0z" fill="#3a3a3a" stroke="#d0d0d0" stroke-width="1.100"/><circle cx="7" cy="6.500" r="2.500" fill="#d0d0d0"/><circle cx="7" cy="6.500" r="1" fill="#333"/></svg>
<svg class="a" style="left:21px;top:858px" width="14" height="15"><path d="M0.500 5h3l4.500-4v13l-4.500-4h-3z" fill="#d0d0d0"/><path d="M9.500 4.500q2 3 0 6M11.500 2.500q3.500 5 0 10" stroke="#d0d0d0" fill="none" stroke-width="1"/></svg>
<div class="a" style="left:39px;top:862px;width:8px;height:8px;border-radius:50%;background:#d0d0d0"></div>
<svg class="a" style="left:53px;top:859px" width="10" height="13"><path d="M2.500 6V4q0-2.500 2.500-2.500t2.500 2.500v2" fill="none" stroke="#d0d0d0" stroke-width="1.500"/><rect x="0.500" y="6" width="9" height="6.500" fill="#d0d0d0"/><rect x="4.200" y="7.800" width="1.600" height="3" fill="#444"/></svg>
<svg class="a" style="left:82px;top:858px" width="17" height="14"><path d="M1 8.500L8.500 2.500L13 3.500L14 7L6 13.500z" fill="#d9d9d9"/><circle cx="14" cy="3" r="1.800" fill="none" stroke="#ddd" stroke-width="1"/><path d="M9 6.500l4-3" stroke="#333" stroke-width="1"/></svg>
<div class="t" style="left:108px;top:859px;color:#c4c4c4;font-size:10px;line-height:13px">#</div>
<div class="t" style="left:140px;top:859px;color:#c4c4c4;font-size:10px;line-height:13px">源名称</div>
<svg class="a" style="left:270px;top:861px" width="13" height="9"><path d="M0 5.500h3M10 5.500h3" stroke="#e8e8e8" stroke-width="1.200"/><path d="M3.500 4q0-3 3-3t3 3q0 1.500-3 1.500t-3-1.500z" fill="#e8e8e8"/><path d="M6.500 5v3.500" stroke="#e8e8e8" stroke-width="1.300"/><circle cx="5.300" cy="3.200" r=".7" fill="#333"/><circle cx="7.700" cy="3.200" r=".7" fill="#333"/></svg>
<svg class="a" style="left:286px;top:860px" width="11" height="11"><circle cx="5.500" cy="5.500" r="2.300" fill="none" stroke="#d8d8d8" stroke-width="1"/><path d="M5.500 0v2.200M5.500 8.800v2.200M0 5.500h2.200M8.800 5.500h2.200M1.600 1.600l1.600 1.600M7.800 7.800l1.600 1.600M9.400 1.600l-1.600 1.600M3.200 7.800l-1.600 1.600" stroke="#d8d8d8" stroke-width=".9"/></svg>
<svg class="a" style="left:301px;top:860px" width="12" height="12"><path d="M1 1l10 10" stroke="#d0d0d0" stroke-width="1.600" stroke-dasharray="2 1"/></svg>
<div class="t" style="left:316px;top:857px;font-family:'Liberation Serif',serif;font-style:italic;font-weight:bold;font-size:14px;line-height:15px;color:#d0d0d0;letter-spacing:-1px">fx</div>
<svg class="a" style="left:330px;top:859px" width="13" height="13"><rect x="0.500" y="0.500" width="12" height="12" fill="#555" stroke="#d0d0d0"/><path d="M3 0v13M10 0v13" stroke="#d0d0d0"/><path d="M0 3h3M0 6h3M0 9h3M10 3h3M10 6h3M10 9h3M3 6.500h7" stroke="#d0d0d0" stroke-width=".9"/></svg>
<svg class="a" style="left:345px;top:859px" width="13" height="13"><g fill="#8a8a8a" stroke="#666" stroke-width=".5"><ellipse cx="4.500" cy="9" rx="4" ry="3" transform="rotate(-35 4.500 9)"/><ellipse cx="6.500" cy="7" rx="4" ry="3" transform="rotate(-35 6.500 7)"/></g><ellipse cx="8.500" cy="4.500" rx="4" ry="3" transform="rotate(-35 8.500 4.500)" fill="#c9c9c9"/></svg>
<svg class="a" style="left:360px;top:859px" width="13" height="13"><circle cx="6.500" cy="6.500" r="5.500" fill="#222" stroke="#d0d0d0"/><path d="M2.600 10.400A5.500 5.500 0 0 1 10.400 2.600z" fill="#e0e0e0"/></svg>
<svg class="a" style="left:374px;top:858px" width="13" height="15"><path d="M6.500 1l5.500 2.500v7l-5.500 3l-5.500-3v-7z" fill="#9a9a9a" stroke="#d8d8d8" stroke-width=".9"/><path d="M1 3.500l5.500 2.500l5.500-2.500M6.500 6v7.500" stroke="#e8e8e8" fill="none" stroke-width=".9"/><path d="M1 3.500l5.500 2.500v7.500l-5.500-3z" fill="#d0d0d0"/></svg>
<div class="t" style="left:390px;top:859px;color:#c4c4c4;font-size:10px;line-height:13px">父级</div>
<div class="a" style="left:1px;top:876px;width:499px;height:76px;background:#3a3a3a;"></div>
<div class="a" style="left:1px;top:894px;width:499px;height:1px;background:#4b4b4b;"></div>
<svg class="a" style="left:6px;top:880px" width="15" height="11"><path d="M0.500 5.500q6.500-7 13 0q-6.500 6-13 0z" fill="#2a2a2a" stroke="#e0e0e0" stroke-width="1.100"/><circle cx="7" cy="5.300" r="2.400" fill="#e0e0e0"/><circle cx="7" cy="5.300" r="1" fill="#222"/></svg>
<div class="a" style="left:6px;top:891px;width:14px;height:1px;background:#6a6a6a;"></div>
<div class="a" style="left:36px;top:878px;width:14px;height:14px;background:linear-gradient(#363636,#404040);border-top:1px solid #2a2a2a;border-left:1px solid #2a2a2a;border-bottom:1px solid #6a6a6a"></div>
<div class="a" style="left:51px;top:878px;width:14px;height:14px;background:linear-gradient(#363636,#404040);border-top:1px solid #2a2a2a;border-left:1px solid #2a2a2a;border-bottom:1px solid #6a6a6a"></div>
<svg class="a" style="left:75px;top:881px" width="7" height="9"><path d="M0.500 0l6 4.500l-6 4.500z" fill="#8c8c8c"/></svg>
<div class="a" style="left:88px;top:879px;width:12px;height:12px;background:#677ee0;"></div>
<div class="t" style="left:108px;top:878px;color:#e4e4e4;font-size:11px;line-height:15px">1</div>
<svg class="a" style="left:139px;top:880px" width="13" height="11"><path d="M6.500 0l1.700 3.600l4 .5l-2.900 2.700l.8 4l-3.600-2l-3.600 2l.8-4l-2.900-2.700l4-.5z" fill="#f0f0f0" stroke="#222" stroke-width=".6"/></svg>
<div class="t" style="left:159px;top:878px;color:#ececec;font-size:12px;line-height:15px">球-黄</div>
<div class="a" style="left:269px;top:878px;width:14px;height:14px;background:linear-gradient(#363636,#404040);border-top:1px solid #2a2a2a;border-left:1px solid #2a2a2a;border-bottom:1px solid #6a6a6a"></div>
<svg class="a" style="left:270px;top:881px" width="13" height="9"><path d="M0 5.500h3M10 5.500h3" stroke="#e8e8e8" stroke-width="1.200"/><path d="M3.500 4q0-3 3-3t3 3q0 1.500-3 1.500t-3-1.500z" fill="#e8e8e8"/><path d="M6.500 5v3.500" stroke="#e8e8e8" stroke-width="1.300"/><circle cx="5.300" cy="3.200" r=".7" fill="#333"/><circle cx="7.700" cy="3.200" r=".7" fill="#333"/></svg>
<div class="a" style="left:285px;top:878px;width:13px;height:14px;background:linear-gradient(#363636,#404040);border-top:1px solid #2a2a2a;border-left:1px solid #2a2a2a;border-bottom:1px solid #6a6a6a"></div>
<svg class="a" style="left:286px;top:880px" width="11" height="11"><circle cx="5.500" cy="5.500" r="2.300" fill="none" stroke="#b8b8b8" stroke-width="1"/><path d="M5.500 0v2.200M5.500 8.800v2.200M0 5.500h2.200M8.800 5.500h2.200M1.600 1.600l1.600 1.600M7.800 7.800l1.600 1.600M9.400 1.600l-1.600 1.600M3.200 7.800l-1.600 1.600" stroke="#b8b8b8" stroke-width=".9"/></svg>
<div class="a" style="left:300px;top:878px;width:13px;height:14px;background:linear-gradient(#363636,#404040);border-top:1px solid #2a2a2a;border-left:1px solid #2a2a2a;border-bottom:1px solid #6a6a6a"></div>
<svg class="a" style="left:300px;top:878px" width="13" height="14"><path d="M1.500 12.500l10-11" stroke="#e0e0e0" stroke-width="1.700"/></svg>
<div class="a" style="left:344px;top:878px;width:14px;height:14px;background:linear-gradient(#363636,#404040);border-top:1px solid #2a2a2a;border-left:1px solid #2a2a2a;border-bottom:1px solid #6a6a6a"></div>
<div class="a" style="left:359px;top:878px;width:14px;height:14px;background:linear-gradient(#363636,#404040);border-top:1px solid #2a2a2a;border-left:1px solid #2a2a2a;border-bottom:1px solid #6a6a6a"></div>
<div class="a" style="left:374px;top:878px;width:14px;height:14px;background:linear-gradient(#363636,#404040);border-top:1px solid #2a2a2a;border-left:1px solid #2a2a2a;border-bottom:1px solid #6a6a6a"></div>
<svg class="a" style="left:390px;top:879px" width="12" height="12"><path d="M6.000 5.400 L6.200 5.300 L6.300 5.300 L6.500 5.400 L6.700 5.500 L6.900 5.600 L7.100 5.900 L7.100 6.100 L7.100 6.400 L7.100 6.700 L6.900 7.000 L6.700 7.300 L6.400 7.500 L6.000 7.600 L5.600 7.600 L5.200 7.600 L4.800 7.400 L4.400 7.100 L4.200 6.700 L4.000 6.300 L3.900 5.800 L3.900 5.300 L4.100 4.700 L4.400 4.300 L4.800 3.900 L5.300 3.600 L5.900 3.400 L6.600 3.400 L7.200 3.500 L7.800 3.800 L8.300 4.300 L8.800 4.900 L9.000 5.600 L9.100 6.300 L9.000 7.100 L8.800 7.800 L8.300 8.400 L7.700 9.000 L6.900 9.400 L6.100 9.600 L5.200 9.600 L4.400 9.400 L3.600 8.900 L2.900 8.300 L2.300 7.500 L2.000 6.600 L1.900 5.700 L2.000 4.700 L2.400 3.700 L3.000 2.900 L3.800 2.200 L4.700 1.700 L5.800 1.400 L6.900 1.400 L8.000 1.700 L9.000 2.300 L9.900 3.000 L10.600 4.000 L11.000 5.200 L11.100 6.400 L10.900 7.600" fill="none" stroke="#d0d0d0" stroke-width="1.150" stroke-linejoin="round"/></svg>
<div class="a" style="left:408px;top:877px;width:89px;height:16px;background:linear-gradient(#4a4a4a,#3a3a3a);border:1px solid #1e1e1e;box-shadow:inset 0 1px 0 #5c5c5c"></div>
<div class="t" style="left:415px;top:878px;color:#e8e8e8;font-size:12px;line-height:15px">无</div>
<div class="a" style="left:478px;top:880px;width:1px;height:10px;background:#262626;"></div>
<div class="a" style="left:479px;top:880px;width:1px;height:10px;background:#5a5a5a;"></div>
<svg class="a" style="left:483px;top:882px" width="10" height="7"><path d="M1.200 1h7.600l-3.800 4.800z" fill="#bcbcbc"/></svg>
<div class="a" style="left:1px;top:913px;width:499px;height:1px;background:#4b4b4b;"></div>
<svg class="a" style="left:6px;top:899px" width="15" height="11"><path d="M0.500 5.500q6.500-7 13 0q-6.500 6-13 0z" fill="#2a2a2a" stroke="#e0e0e0" stroke-width="1.100"/><circle cx="7" cy="5.300" r="2.400" fill="#e0e0e0"/><circle cx="7" cy="5.300" r="1" fill="#222"/></svg>
<div class="a" style="left:6px;top:910px;width:14px;height:1px;background:#6a6a6a;"></div>
<div class="a" style="left:36px;top:897px;width:14px;height:14px;background:linear-gradient(#363636,#404040);border-top:1px solid #2a2a2a;border-left:1px solid #2a2a2a;border-bottom:1px solid #6a6a6a"></div>
<div class="a" style="left:51px;top:897px;width:14px;height:14px;background:linear-gradient(#363636,#404040);border-top:1px solid #2a2a2a;border-left:1px solid #2a2a2a;border-bottom:1px solid #6a6a6a"></div>
<svg class="a" style="left:75px;top:900px" width="7" height="9"><path d="M0.500 0l6 4.500l-6 4.500z" fill="#8c8c8c"/></svg>
<div class="a" style="left:88px;top:898px;width:12px;height:12px;background:#677ee0;"></div>
<div class="t" style="left:108px;top:897px;color:#e4e4e4;font-size:11px;line-height:15px">2</div>
<svg class="a" style="left:139px;top:899px" width="13" height="11"><path d="M6.500 0l1.700 3.600l4 .5l-2.900 2.700l.8 4l-3.600-2l-3.600 2l.8-4l-2.900-2.700l4-.5z" fill="#f0f0f0" stroke="#222" stroke-width=".6"/></svg>
<div class="t" style="left:159px;top:897px;color:#ececec;font-size:12px;line-height:15px">球-红</div>
<div class="a" style="left:269px;top:897px;width:14px;height:14px;background:linear-gradient(#363636,#404040);border-top:1px solid #2a2a2a;border-left:1px solid #2a2a2a;border-bottom:1px solid #6a6a6a"></div>
<svg class="a" style="left:270px;top:900px" width="13" height="9"><path d="M0 5.500h3M10 5.500h3" stroke="#e8e8e8" stroke-width="1.200"/><path d="M3.500 4q0-3 3-3t3 3q0 1.500-3 1.500t-3-1.500z" fill="#e8e8e8"/><path d="M6.500 5v3.500" stroke="#e8e8e8" stroke-width="1.300"/><circle cx="5.300" cy="3.200" r=".7" fill="#333"/><circle cx="7.700" cy="3.200" r=".7" fill="#333"/></svg>
<div class="a" style="left:285px;top:897px;width:13px;height:14px;background:linear-gradient(#363636,#404040);border-top:1px solid #2a2a2a;border-left:1px solid #2a2a2a;border-bottom:1px solid #6a6a6a"></div>
<svg class="a" style="left:286px;top:899px" width="11" height="11"><circle cx="5.500" cy="5.500" r="2.300" fill="none" stroke="#b8b8b8" stroke-width="1"/><path d="M5.500 0v2.200M5.500 8.800v2.200M0 5.500h2.200M8.800 5.500h2.200M1.600 1.600l1.600 1.600M7.800 7.800l1.600 1.600M9.400 1.600l-1.600 1.600M3.200 7.800l-1.600 1.600" stroke="#b8b8b8" stroke-width=".9"/></svg>
<div class="a" style="left:300px;top:897px;width:13px;height:14px;background:linear-gradient(#363636,#404040);border-top:1px solid #2a2a2a;border-left:1px solid #2a2a2a;border-bottom:1px solid #6a6a6a"></div>
<svg class="a" style="left:300px;top:897px" width="13" height="14"><path d="M1.500 12.500l10-11" stroke="#e0e0e0" stroke-width="1.700"/></svg>
<div class="a" style="left:344px;top:897px;width:14px;height:14px;background:linear-gradient(#363636,#404040);border-top:1px solid #2a2a2a;border-left:1px solid #2a2a2a;border-bottom:1px solid #6a6a6a"></div>
<div class="a" style="left:359px;top:897px;width:14px;height:14px;background:linear-gradient(#363636,#404040);border-top:1px solid #2a2a2a;border-left:1px solid #2a2a2a;border-bottom:1px solid #6a6a6a"></div>
<div class="a" style="left:374px;top:897px;width:14px;height:14px;background:linear-gradient(#363636,#404040);border-top:1px solid #2a2a2a;border-left:1px solid #2a2a2a;border-bottom:1px solid #6a6a6a"></div>
<svg class="a" style="left:390px;top:898px" width="12" height="12"><path d="M6.000 5.400 L6.200 5.300 L6.300 5.300 L6.500 5.400 L6.700 5.500 L6.900 5.600 L7.100 5.900 L7.100 6.100 L7.100 6.400 L7.100 6.700 L6.900 7.000 L6.700 7.300 L6.400 7.500 L6.000 7.600 L5.600 7.600 L5.200 7.600 L4.800 7.400 L4.400 7.100 L4.200 6.700 L4.000 6.300 L3.900 5.800 L3.900 5.300 L4.100 4.700 L4.400 4.300 L4.800 3.900 L5.300 3.600 L5.900 3.400 L6.600 3.400 L7.200 3.500 L7.800 3.800 L8.300 4.300 L8.800 4.900 L9.000 5.600 L9.100 6.300 L9.000 7.100 L8.800 7.800 L8.300 8.400 L7.700 9.000 L6.900 9.400 L6.100 9.600 L5.200 9.600 L4.400 9.400 L3.600 8.900 L2.900 8.300 L2.300 7.500 L2.000 6.600 L1.900 5.700 L2.000 4.700 L2.400 3.700 L3.000 2.900 L3.800 2.200 L4.700 1.700 L5.800 1.400 L6.900 1.400 L8.000 1.700 L9.000 2.300 L9.900 3.000 L10.600 4.000 L11.000 5.200 L11.100 6.400 L10.900 7.600" fill="none" stroke="#d0d0d0" stroke-width="1.150" stroke-linejoin="round"/></svg>
<div class="a" style="left:408px;top:896px;width:89px;height:16px;background:linear-gradient(#4a4a4a,#3a3a3a);border:1px solid #1e1e1e;box-shadow:inset 0 1px 0 #5c5c5c"></div>
<div class="t" style="left:415px;top:897px;color:#e8e8e8;font-size:12px;line-height:15px">无</div>
<div class="a" style="left:478px;top:899px;width:1px;height:10px;background:#262626;"></div>
<div class="a" style="left:479px;top:899px;width:1px;height:10px;background:#5a5a5a;"></div>
<svg class="a" style="left:483px;top:901px" width="10" height="7"><path d="M1.200 1h7.600l-3.800 4.800z" fill="#bcbcbc"/></svg>
<div class="a" style="left:1px;top:932px;width:499px;height:1px;background:#4b4b4b;"></div>
<svg class="a" style="left:6px;top:918px" width="15" height="11"><path d="M0.500 5.500q6.500-7 13 0q-6.500 6-13 0z" fill="#2a2a2a" stroke="#e0e0e0" stroke-width="1.100"/><circle cx="7" cy="5.300" r="2.400" fill="#e0e0e0"/><circle cx="7" cy="5.300" r="1" fill="#222"/></svg>
<div class="a" style="left:6px;top:929px;width:14px;height:1px;background:#6a6a6a;"></div>
<div class="a" style="left:36px;top:916px;width:14px;height:14px;background:linear-gradient(#363636,#404040);border-top:1px solid #2a2a2a;border-left:1px solid #2a2a2a;border-bottom:1px solid #6a6a6a"></div>
<div class="a" style="left:51px;top:916px;width:14px;height:14px;background:linear-gradient(#363636,#404040);border-top:1px solid #2a2a2a;border-left:1px solid #2a2a2a;border-bottom:1px solid #6a6a6a"></div>
<svg class="a" style="left:75px;top:919px" width="7" height="9"><path d="M0.500 0l6 4.500l-6 4.500z" fill="#8c8c8c"/></svg>
<div class="a" style="left:88px;top:917px;width:12px;height:12px;background:#677ee0;"></div>
<div class="t" style="left:108px;top:916px;color:#e4e4e4;font-size:11px;line-height:15px">3</div>
<svg class="a" style="left:139px;top:918px" width="13" height="11"><path d="M6.500 0l1.700 3.600l4 .5l-2.900 2.700l.8 4l-3.600-2l-3.600 2l.8-4l-2.900-2.700l4-.5z" fill="#f0f0f0" stroke="#222" stroke-width=".6"/></svg>
<div class="t" style="left:159px;top:916px;color:#ececec;font-size:12px;line-height:15px">球-绿</div>
<div class="a" style="left:269px;top:916px;width:14px;height:14px;background:linear-gradient(#363636,#404040);border-top:1px solid #2a2a2a;border-left:1px solid #2a2a2a;border-bottom:1px solid #6a6a6a"></div>
<svg class="a" style="left:270px;top:919px" width="13" height="9"><path d="M0 5.500h3M10 5.500h3" stroke="#e8e8e8" stroke-width="1.200"/><path d="M3.500 4q0-3 3-3t3 3q0 1.500-3 1.500t-3-1.500z" fill="#e8e8e8"/><path d="M6.500 5v3.500" stroke="#e8e8e8" stroke-width="1.300"/><circle cx="5.300" cy="3.200" r=".7" fill="#333"/><circle cx="7.700" cy="3.200" r=".7" fill="#333"/></svg>
<div class="a" style="left:285px;top:916px;width:13px;height:14px;background:linear-gradient(#363636,#404040);border-top:1px solid #2a2a2a;border-left:1px solid #2a2a2a;border-bottom:1px solid #6a6a6a"></div>
<svg class="a" style="left:286px;top:918px" width="11" height="11"><circle cx="5.500" cy="5.500" r="2.300" fill="none" stroke="#b8b8b8" stroke-width="1"/><path d="M5.500 0v2.200M5.500 8.800v2.200M0 5.500h2.200M8.800 5.500h2.200M1.600 1.600l1.600 1.600M7.800 7.800l1.600 1.600M9.400 1.600l-1.600 1.600M3.200 7.800l-1.600 1.600" stroke="#b8b8b8" stroke-width=".9"/></svg>
<div class="a" style="left:300px;top:916px;width:13px;height:14px;background:linear-gradient(#363636,#404040);border-top:1px solid #2a2a2a;border-left:1px solid #2a2a2a;border-bottom:1px solid #6a6a6a"></div>
<svg class="a" style="left:300px;top:916px" width="13" height="14"><path d="M1.500 12.500l10-11" stroke="#e0e0e0" stroke-width="1.700"/></svg>
<div class="a" style="left:344px;top:916px;width:14px;height:14px;background:linear-gradient(#363636,#404040);border-top:1px solid #2a2a2a;border-left:1px solid #2a2a2a;border-bottom:1px solid #6a6a6a"></div>
<div class="a" style="left:359px;top:916px;width:14px;height:14px;background:linear-gradient(#363636,#404040);border-top:1px solid #2a2a2a;border-left:1px solid #2a2a2a;border-bottom:1px solid #6a6a6a"></div>
<div class="a" style="left:374px;top:916px;width:14px;height:14px;background:linear-gradient(#363636,#404040);border-top:1px solid #2a2a2a;border-left:1px solid #2a2a2a;border-bottom:1px solid #6a6a6a"></div>
<svg class="a" style="left:390px;top:917px" width="12" height="12"><path d="M6.000 5.400 L6.200 5.300 L6.300 5.300 L6.500 5.400 L6.700 5.500 L6.900 5.600 L7.100 5.900 L7.100 6.100 L7.100 6.400 L7.100 6.700 L6.900 7.000 L6.700 7.300 L6.400 7.500 L6.000 7.600 L5.600 7.600 L5.200 7.600 L4.800 7.400 L4.400 7.100 L4.200 6.700 L4.000 6.300 L3.900 5.800 L3.900 5.300 L4.100 4.700 L4.400 4.300 L4.800 3.900 L5.300 3.600 L5.900 3.400 L6.600 3.400 L7.200 3.500 L7.800 3.800 L8.300 4.300 L8.800 4.900 L9.000 5.600 L9.100 6.300 L9.000 7.100 L8.800 7.800 L8.300 8.400 L7.700 9.000 L6.900 9.400 L6.100 9.600 L5.200 9.600 L4.400 9.400 L3.600 8.900 L2.900 8.300 L2.300 7.500 L2.000 6.600 L1.900 5.700 L2.000 4.700 L2.400 3.700 L3.000 2.900 L3.800 2.200 L4.700 1.700 L5.800 1.400 L6.900 1.400 L8.000 1.700 L9.000 2.300 L9.900 3.000 L10.600 4.000 L11.000 5.200 L11.100 6.400 L10.900 7.600" fill="none" stroke="#d0d0d0" stroke-width="1.150" stroke-linejoin="round"/></svg>
<div class="a" style="left:408px;top:915px;width:89px;height:16px;background:linear-gradient(#4a4a4a,#3a3a3a);border:1px solid #1e1e1e;box-shadow:inset 0 1px 0 #5c5c5c"></div>
<div class="t" style="left:415px;top:916px;color:#e8e8e8;font-size:12px;line-height:15px">无</div>
<div class="a" style="left:478px;top:918px;width:1px;height:10px;background:#262626;"></div>
<div class="a" style="left:479px;top:918px;width:1px;height:10px;background:#5a5a5a;"></div>
<svg class="a" style="left:483px;top:920px" width="10" height="7"><path d="M1.200 1h7.600l-3.800 4.800z" fill="#bcbcbc"/></svg>
<div class="a" style="left:1px;top:951px;width:499px;height:1px;background:#4b4b4b;"></div>
<svg class="a" style="left:6px;top:937px" width="15" height="11"><path d="M0.500 5.500q6.500-7 13 0q-6.500 6-13 0z" fill="#2a2a2a" stroke="#e0e0e0" stroke-width="1.100"/><circle cx="7" cy="5.300" r="2.400" fill="#e0e0e0"/><circle cx="7" cy="5.300" r="1" fill="#222"/></svg>
<div class="a" style="left:6px;top:948px;width:14px;height:1px;background:#6a6a6a;"></div>
<div class="a" style="left:36px;top:935px;width:14px;height:14px;background:linear-gradient(#363636,#404040);border-top:1px solid #2a2a2a;border-left:1px solid #2a2a2a;border-bottom:1px solid #6a6a6a"></div>
<div class="a" style="left:51px;top:935px;width:14px;height:14px;background:linear-gradient(#363636,#404040);border-top:1px solid #2a2a2a;border-left:1px solid #2a2a2a;border-bottom:1px solid #6a6a6a"></div>
<svg class="a" style="left:75px;top:938px" width="7" height="9"><path d="M0.500 0l6 4.500l-6 4.500z" fill="#8c8c8c"/></svg>
<div class="a" style="left:88px;top:936px;width:12px;height:12px;background:#b83a3a;"></div>
<div class="t" style="left:108px;top:935px;color:#e4e4e4;font-size:11px;line-height:15px">4</div>
<div class="a" style="left:137px;top:934px;width:16px;height:17px;background:#fff;border:1px solid #000"></div>
<div class="t" style="left:159px;top:935px;color:#ececec;font-size:12px;line-height:15px">白色 固态层&nbsp; <span style="font-size:11px">1</span></div>
<div class="a" style="left:269px;top:935px;width:14px;height:14px;background:linear-gradient(#363636,#404040);border-top:1px solid #2a2a2a;border-left:1px solid #2a2a2a;border-bottom:1px solid #6a6a6a"></div>
<svg class="a" style="left:270px;top:938px" width="13" height="9"><path d="M0 5.500h3M10 5.500h3" stroke="#e8e8e8" stroke-width="1.200"/><path d="M3.500 4q0-3 3-3t3 3q0 1.500-3 1.500t-3-1.500z" fill="#e8e8e8"/><path d="M6.500 5v3.500" stroke="#e8e8e8" stroke-width="1.300"/><circle cx="5.300" cy="3.200" r=".7" fill="#333"/><circle cx="7.700" cy="3.200" r=".7" fill="#333"/></svg>
<div class="a" style="left:285px;top:935px;width:13px;height:14px;background:linear-gradient(#363636,#404040);border-top:1px solid #2a2a2a;border-left:1px solid #2a2a2a;border-bottom:1px solid #6a6a6a"></div>
<div class="a" style="left:300px;top:935px;width:13px;height:14px;background:linear-gradient(#363636,#404040);border-top:1px solid #2a2a2a;border-left:1px solid #2a2a2a;border-bottom:1px solid #6a6a6a"></div>
<svg class="a" style="left:300px;top:935px" width="13" height="14"><path d="M1.500 12.500l10-11" stroke="#e0e0e0" stroke-width="1.700"/></svg>
<div class="a" style="left:344px;top:935px;width:14px;height:14px;background:linear-gradient(#363636,#404040);border-top:1px solid #2a2a2a;border-left:1px solid #2a2a2a;border-bottom:1px solid #6a6a6a"></div>
<div class="a" style="left:359px;top:935px;width:14px;height:14px;background:linear-gradient(#363636,#404040);border-top:1px solid #2a2a2a;border-left:1px solid #2a2a2a;border-bottom:1px solid #6a6a6a"></div>
<div class="a" style="left:374px;top:935px;width:14px;height:14px;background:linear-gradient(#363636,#404040);border-top:1px solid #2a2a2a;border-left:1px solid #2a2a2a;border-bottom:1px solid #6a6a6a"></div>
<svg class="a" style="left:390px;top:936px" width="12" height="12"><path d="M6.000 5.400 L6.200 5.300 L6.300 5.300 L6.500 5.400 L6.700 5.500 L6.900 5.600 L7.100 5.900 L7.100 6.100 L7.100 6.400 L7.100 6.700 L6.900 7.000 L6.700 7.300 L6.400 7.500 L6.000 7.600 L5.600 7.600 L5.200 7.600 L4.800 7.400 L4.400 7.100 L4.200 6.700 L4.000 6.300 L3.900 5.800 L3.900 5.300 L4.100 4.700 L4.400 4.300 L4.800 3.900 L5.300 3.600 L5.900 3.400 L6.600 3.400 L7.200 3.500 L7.800 3.800 L8.300 4.300 L8.800 4.900 L9.000 5.600 L9.100 6.300 L9.000 7.100 L8.800 7.800 L8.300 8.400 L7.700 9.000 L6.900 9.400 L6.100 9.600 L5.200 9.600 L4.400 9.400 L3.600 8.900 L2.900 8.300 L2.300 7.500 L2.000 6.600 L1.900 5.700 L2.000 4.700 L2.400 3.700 L3.000 2.900 L3.800 2.200 L4.700 1.700 L5.800 1.400 L6.900 1.400 L8.000 1.700 L9.000 2.300 L9.900 3.000 L10.600 4.000 L11.000 5.200 L11.100 6.400 L10.900 7.600" fill="none" stroke="#d0d0d0" stroke-width="1.150" stroke-linejoin="round"/></svg>
<div class="a" style="left:408px;top:934px;width:89px;height:16px;background:linear-gradient(#4a4a4a,#3a3a3a);border:1px solid #1e1e1e;box-shadow:inset 0 1px 0 #5c5c5c"></div>
<div class="t" style="left:415px;top:935px;color:#e8e8e8;font-size:12px;line-height:15px">无</div>
<div class="a" style="left:478px;top:937px;width:1px;height:10px;background:#262626;"></div>
<div class="a" style="left:479px;top:937px;width:1px;height:10px;background:#5a5a5a;"></div>
<svg class="a" style="left:483px;top:939px" width="10" height="7"><path d="M1.200 1h7.600l-3.800 4.800z" fill="#bcbcbc"/></svg>
<div class="a" style="left:500px;top:876px;width:1px;height:143px;background:#2a2a2a;"></div>
<div class="a" style="left:501px;top:876px;width:16px;height:143px;background:#393939;"></div>
<div class="a" style="left:516px;top:856px;width:1px;height:20px;background:#2e2e2e;"></div>
<svg class="a" style="left:504px;top:881px" width="10" height="7"><path d="M0 7L5 0L10 7z" fill="#666"/></svg>
<svg class="a" style="left:504px;top:1007px" width="10" height="8"><path d="M0 0h10L5 8z" fill="#666"/></svg>
<div class="a" style="left:1px;top:1019px;width:516px;height:1px;background:#2a2a2a;"></div>
<div class="a" style="left:1px;top:1020px;width:516px;height:19px;background:#3b3b3b;"></div>
<div class="a" style="left:5px;top:1022px;width:17px;height:16px;background:#262626;border:1px solid #151515"></div>
<svg class="a" style="left:6px;top:1023px" width="15" height="14"><rect x="0.500" y="0.500" width="10" height="9" fill="none" stroke="#d8d8d8"/><rect x="3.500" y="3.500" width="10" height="9" fill="#262626" stroke="#d8d8d8"/><path d="M5.500 8l2 2.500l4-5" stroke="#d8d8d8" fill="none" stroke-width="1.200"/></svg>
<svg class="a" style="left:25px;top:1023px" width="15" height="14"><circle cx="5.500" cy="6" r="4.500" fill="none" stroke="#d8d8d8" stroke-width="1.200"/><rect x="6.500" y="6.500" width="7" height="6.500" fill="#414141" stroke="#d8d8d8" stroke-width="1.200"/></svg>
<svg class="a" style="left:43px;top:1023px" width="12" height="14"><path d="M4 1q-2 0-2 2v2q0 1.500-1.500 1.500q1.500 0 1.500 1.500v2q0 2 2 2M8 1q2 0 2 2v2q0 1.500 1.500 1.500q-1.500 0-1.500 1.500v2q0 2-2 2" fill="none" stroke="#d8d8d8" stroke-width="1.500"/></svg>
<div class="a" style="left:267px;top:1023px;width:115px;height:13px;background:linear-gradient(#474747,#3a3a3a);border:1px solid #1a1a1a;box-shadow:inset 0 1px 0 #5a5a5a"></div>
<div class="t" style="left:287px;top:1023px;color:#c4c4c4;font-size:10px;line-height:13px;word-spacing:4px">切换开关 / 模式</div>
<div class="a" style="left:518px;top:826px;width:913px;height:9px;background:#7b7b7b;"></div>
<div class="a" style="left:518px;top:835px;width:913px;height:1px;background:#242424;"></div>
<div class="a" style="left:518px;top:825px;width:913px;height:1px;background:#333;"></div>
<div class="a" style="left:518px;top:826px;width:7px;height:9px;background:#d9a010;border-radius:5px 0 0 0;border:1px solid #7a5a00"></div>
<div class="a" style="left:520px;top:828px;width:1px;height:5px;background:#6a4a00;"></div>
<div class="a" style="left:522px;top:828px;width:1px;height:5px;background:#6a4a00;"></div>
<div class="a" style="left:518px;top:836px;width:913px;height:19px;background:#3f3f3f;"></div>
<div class="a" style="left:518px;top:855px;width:913px;height:1px;background:#242424;"></div>
<div class="a" style="left:518px;top:836px;width:913px;height:20px;overflow:hidden">
<div class="t" style="left:-22.7px;top:1px;width:60px;text-align:center;color:#dcdcdc;font-size:10px;line-height:12px">0:00f</div>
<div class="t" style="left:68.6px;top:1px;width:60px;text-align:center;color:#dcdcdc;font-size:10px;line-height:12px">05f</div>
<div class="a" style="left:98px;top:14px;width:1px;height:5px;background:#b0b0b0;"></div>
<div class="t" style="left:159.9px;top:1px;width:60px;text-align:center;color:#dcdcdc;font-size:10px;line-height:12px">10f</div>
<div class="a" style="left:190px;top:14px;width:1px;height:5px;background:#b0b0b0;"></div>
<div class="t" style="left:251.2px;top:1px;width:60px;text-align:center;color:#dcdcdc;font-size:10px;line-height:12px">15f</div>
<div class="a" style="left:281px;top:14px;width:1px;height:5px;background:#b0b0b0;"></div>
<div class="t" style="left:342.5px;top:1px;width:60px;text-align:center;color:#dcdcdc;font-size:10px;line-height:12px">20f</div>
<div class="a" style="left:372px;top:14px;width:1px;height:5px;background:#b0b0b0;"></div>
<div class="t" style="left:433.8px;top:1px;width:60px;text-align:center;color:#dcdcdc;font-size:10px;line-height:12px">01:00f</div>
<div class="a" style="left:464px;top:14px;width:1px;height:5px;background:#b0b0b0;"></div>
<div class="t" style="left:525.1px;top:1px;width:60px;text-align:center;color:#dcdcdc;font-size:10px;line-height:12px">05f</div>
<div class="a" style="left:555px;top:14px;width:1px;height:5px;background:#b0b0b0;"></div>
<div class="t" style="left:616.4px;top:1px;width:60px;text-align:center;color:#dcdcdc;font-size:10px;line-height:12px">10f</div>
<div class="a" style="left:646px;top:14px;width:1px;height:5px;background:#b0b0b0;"></div>
<div class="t" style="left:707.7px;top:1px;width:60px;text-align:center;color:#dcdcdc;font-size:10px;line-height:12px">15f</div>
<div class="a" style="left:737px;top:14px;width:1px;height:5px;background:#b0b0b0;"></div>
<div class="t" style="left:799.0px;top:1px;width:60px;text-align:center;color:#dcdcdc;font-size:10px;line-height:12px">20f</div>
<div class="a" style="left:829px;top:14px;width:1px;height:5px;background:#b0b0b0;"></div>
<div class="t" style="left:890.3px;top:1px;width:60px;text-align:center;color:#dcdcdc;font-size:10px;line-height:12px">02:00f</div>
<div class="a" style="left:920px;top:14px;width:1px;height:5px;background:#b0b0b0;"></div>
</div>
<div class="a" style="left:518px;top:856px;width:913px;height:15px;background:#727272;"></div>
<div class="a" style="left:518px;top:871px;width:913px;height:1px;background:#242424;"></div>
<div class="a" style="left:518px;top:857px;width:6px;height:14px;background:#d9a010;border:1px solid #7a5a00"></div>
<div class="a" style="left:520px;top:859px;width:1px;height:10px;background:#7a5a00;"></div>
<div class="a" style="left:518px;top:872px;width:913px;height:4px;background:#3a3a3a;"></div>
<div class="a" style="left:526px;top:872px;width:17px;height:3px;background:#2fc23f;"></div>
<div class="a" style="left:518px;top:875px;width:913px;height:1px;background:#2a2a2a;"></div>
<div class="a" style="left:517px;top:876px;width:914px;height:114px;background:#4f4f4f;"></div>
<div class="a" style="left:616px;top:876px;width:1px;height:114px;background:#383838;"></div>
<div class="a" style="left:708px;top:876px;width:1px;height:114px;background:#383838;"></div>
<div class="a" style="left:799px;top:876px;width:1px;height:114px;background:#383838;"></div>
<div class="a" style="left:890px;top:876px;width:1px;height:114px;background:#383838;"></div>
<div class="a" style="left:982px;top:876px;width:1px;height:114px;background:#383838;"></div>
<div class="a" style="left:1073px;top:876px;width:1px;height:114px;background:#383838;"></div>
<div class="a" style="left:1164px;top:876px;width:1px;height:114px;background:#383838;"></div>
<div class="a" style="left:1255px;top:876px;width:1px;height:114px;background:#383838;"></div>
<div class="a" style="left:1347px;top:876px;width:1px;height:114px;background:#383838;"></div>
<div class="a" style="left:1438px;top:876px;width:1px;height:114px;background:#383838;"></div>
<div class="a" style="left:518px;top:883px;width:913px;height:1px;background:#3c3c3c;"></div>
<div class="a" style="left:518px;top:933px;width:913px;height:1px;background:#383838;"></div>
<div class="a" style="left:518px;top:981px;width:913px;height:2px;background:#383838;"></div>
<div class="a" style="left:527px;top:876px;width:30px;height:6px;overflow:hidden"><div class="t" style="left:0;top:-6px;color:#d4dae6;font-size:11px;line-height:13px">100</div></div>
<div class="t" style="left:527px;top:919px;color:#d4dae6;font-size:11px;line-height:13px">50</div>
<div class="t" style="left:527px;top:969px;color:#d4dae6;font-size:11px;line-height:13px">0</div>
<div class="a" style="left:525px;top:826px;width:1px;height:164px;background:#f01818;"></div>
<svg class="a" style="left:519px;top:839px" width="13" height="17"><path d="M1.500 2q0-1.500 1.500-1.500h7q1.500 0 1.500 1.500v5.500q0 3-3.500 7.500l-1.500 1.500l-1.500-1.500q-3.500-4.500-3.500-7.500z" fill="#e0a818" stroke="#8a6200" stroke-width=".8"/><path d="M4.500 3v3M6.500 3v3M8.500 3v3" stroke="#5a3a00" stroke-width=".9"/><path d="M6.500 7v9" stroke="#eee" stroke-width="1"/></svg>
<svg class="a" style="left:976px;top:1002px" width="17" height="14"><path d="M0.500 6q6-6.500 12 0q-6 6-12 0z" fill="#3a3a3a" stroke="#cfcfcf" stroke-width="1.100"/><circle cx="6.500" cy="6" r="2.300" fill="#cfcfcf"/><path d="M13 10h4l-2 2z" fill="#ccc"/></svg>
<svg class="a" style="left:999px;top:1002px" width="18" height="14"><path d="M1 1h11M1 3.500h11M1 6.500h11M1 9.500h11" stroke="#cfcfcf" stroke-width="1.400"/><rect x="1" y="3" width="11" height="7.500" fill="none" stroke="#cfcfcf"/><path d="M4.500 3v7.500" stroke="#414141"/><path d="M13 10h4l-2 2z" fill="#ccc"/></svg>
<div class="a" style="left:1023px;top:1000px;width:22px;height:19px;background:#2c2c2c;border:1px solid #0e0e0e;box-shadow:0 0 0 1px #4e4e4e"></div>
<svg class="a" style="left:1028px;top:1004px" width="12" height="12"><rect x="1.500" y="1.500" width="9" height="9" fill="none" stroke="#bdbdbd" stroke-dasharray="1 1"/><g fill="none" stroke="#cfcfcf" stroke-width=".8"><rect x="0.400" y="0.400" width="2.200" height="2.200"/><rect x="4.900" y="0.400" width="2.200" height="2.200"/><rect x="9.400" y="0.400" width="2.200" height="2.200"/><rect x="0.400" y="4.900" width="2.200" height="2.200"/><rect x="4.900" y="4.900" width="2.200" height="2.200"/><rect x="9.400" y="4.900" width="2.200" height="2.200"/><rect x="0.400" y="9.400" width="2.200" height="2.200"/><rect x="4.900" y="9.400" width="2.200" height="2.200"/><rect x="9.400" y="9.400" width="2.200" height="2.200"/></g></svg>
<div class="a" style="left:1048px;top:1000px;width:22px;height:19px;background:#2c2c2c;border:1px solid #0e0e0e;box-shadow:0 0 0 1px #4e4e4e"></div>
<svg class="a" style="left:1053px;top:1004px" width="11" height="11"><path d="M2 10.500V5.500a3.500 3.500 0 0 1 7 0V10.500" fill="none" stroke="#a8a8a8" stroke-width="2.600"/><path d="M0.700 8.500h2.600v2h-2.600zM7.700 8.500h2.600v2h-2.600z" fill="#f0f0f0"/></svg>
<div class="a" style="left:1097px;top:1000px;width:23px;height:19px;background:#2c2c2c;border:1px solid #0e0e0e;box-shadow:0 0 0 1px #4e4e4e"></div>
<svg class="a" style="left:1100px;top:1002px" width="19" height="16"><path d="M2.500 1v13M0.500 3.500l2-2.500l2 2.500M0.500 11.500l2 2.500l2-2.500" stroke="#d8d8d8" fill="none" stroke-width="1"/><circle cx="10.500" cy="6" r="4" fill="#555" stroke="#e0e0e0" stroke-width="1.500"/><path d="M13.500 9l4.500 4.500" stroke="#e0e0e0" stroke-width="2.200"/></svg>
<svg class="a" style="left:1124px;top:1002px" width="19" height="15"><rect x="0.500" y="1.500" width="18" height="12" fill="#4a4a4a" stroke="#6e6e6e"/><path d="M1 4h17M1 11h17" stroke="#6e6e6e" stroke-width=".8"/><path d="M1 5q5-1 8 2.500t9 2.500" stroke="#6e6e6e" fill="none" stroke-width="1.200"/></svg>
<svg class="a" style="left:1149px;top:1003px" width="19" height="13"><rect x="0.700" y="0.700" width="17.500" height="10.800" rx="1" fill="#5a5a5a" stroke="#d0d0d0" stroke-width="1.200"/><path d="M2 4.500q3.500-2 7.500 0t7.500-.5M2 8q3.500-2 7.500 0t7.500-.5" stroke="#f0f0f0" fill="none" stroke-width="1.300"/></svg>
<svg class="a" style="left:1197px;top:1001px" width="24" height="17"><path d="M1 13q9-1 11-9M1 6q10 1 14 9" stroke="#6e6e6e" fill="none"/><path d="M0 3h3M6 3h17M12 8.500h3M19 8.500h4M12 13.500h3M19 13.500h4" stroke="#6e6e6e" stroke-width=".9"/><text x="3" y="5.500" font-size="6" fill="#6e6e6e" font-family="Liberation Sans">X</text><text x="15" y="11" font-size="6" fill="#6e6e6e" font-family="Liberation Sans">Y</text><text x="15" y="16.500" font-size="6" fill="#6e6e6e" font-family="Liberation Sans">Z</text></svg>
<svg class="a" style="left:1240px;top:995px" width="191" height="26" viewBox="1240 995 191 26" fill="none" stroke="#6e6e6e" stroke-width="1">
<path d="M1257.500 1003.500l5.500 5.500l-5.500 5.500l-5.500-5.500z" fill="#6e6e6e" stroke="none"/><path d="M1262.500 1013h3.500l-1.750 2z" fill="#6e6e6e" stroke="none"/>
<path d="M1274 1006.500h3v5M1279.500 1013.500h6v-5M1288 1006.500h4.500"/><rect x="1275" y="1011.500" width="4.500" height="4.500"/><rect x="1283.500" y="1004" width="4.500" height="4.500"/>
<path d="M1299 1013.500h3M1306.500 1011.500l3.500-3M1314 1006.500h3.500"/><rect x="1302" y="1011.500" width="4.500" height="4.500"/><rect x="1309.500" y="1004" width="4.500" height="4.500"/>
<path d="M1326 1015.500l2.500-5.500M1333 1007q4-2 8.500-2"/><rect x="1328" y="1005.500" width="4.500" height="4.500"/>
<path d="M1374 1006.500h6.500M1385 1006.500h6.500M1373 1015q4-.5 5.500-4.500t2.500-4M1392 1015q-4-.5-5.500-4.500t-2.500-4"/><rect x="1380.500" y="1004" width="4.500" height="4.500"/><circle cx="1374" cy="1006.500" r="1" fill="#6e6e6e"/><circle cx="1391.500" cy="1006.500" r="1" fill="#6e6e6e"/>
<path d="M1405 1006.500h6.500M1400 1015q5-.5 7-4.500t4.500-4"/><rect x="1411.500" y="1004" width="4.500" height="4.500"/><circle cx="1405" cy="1006.500" r="1" fill="#6e6e6e"/>
<rect x="1425.500" y="1004" width="4.500" height="4.500"/>
</svg>
<div class="a" style="left:518px;top:1020px;width:913px;height:1px;background:#2a2a2a;"></div>
<div class="a" style="left:626px;top:1021px;width:805px;height:18px;background:#383838;border-left:1px solid #262626;border-top:1px solid #2a2a2a"></div>
<svg class="a" style="left:523px;top:1027px" width="11" height="7"><path d="M0 6.500l3.500-4l2 2l2-3l3.500 5z" fill="#d0d0d0"/></svg>
<div class="a" style="left:551px;top:1029px;width:41px;height:4px;background:#2e2e2e;border:1px solid #151515"></div>
<svg class="a" style="left:545px;top:1024px" width="9" height="12"><path d="M0.500 11.500v-7l4-4l4 4v7z" fill="#5a5a5a" stroke="#1e1e1e"/></svg>
<svg class="a" style="left:603px;top:1024px" width="19" height="10"><path d="M0 9.500l6-7l3 3.500l3.500-5.500l6.500 9z" fill="#c4c4c4"/></svg>
<svg class="a" style="left:630px;top:1023px" width="7" height="11"><path d="M7 0v11L0 5.500z" fill="#666"/></svg>
<div class="a" style="left:0px;top:1039px;width:1431px;height:1px;background:#1c1c1c;"></div>
<div class="a" style="left:0px;top:1040px;width:1431px;height:2px;background:#c8bca8;"></div>
<div class="a" style="left:0px;top:1042px;width:1431px;height:6px;background:#9a968e;"></div>
<div class="a" style="left:0px;top:1042px;width:51px;height:6px;background:#8c8c89;"></div>
<div class="a" style="left:51px;top:1041px;width:60px;height:7px;background:#a3a39f;border:1px solid #c9c5bb;border-bottom:none"></div>
<div class="a" style="left:113px;top:1041px;width:55px;height:7px;background:#a3a39f;border:1px solid #c9c5bb;border-bottom:none"></div>
<div class="a" style="left:174px;top:1041px;width:60px;height:7px;background:#a3a39f;border:1px solid #c9c5bb;border-bottom:none"></div>
<div class="a" style="left:237px;top:1041px;width:52px;height:7px;background:#a3a39f;border:1px solid #c9c5bb;border-bottom:none"></div>
<div class="a" style="left:299px;top:1041px;width:60px;height:7px;background:#a3a39f;border:1px solid #c9c5bb;border-bottom:none"></div>
<div class="a" style="left:168px;top:1041px;width:4px;height:7px;background:#a3a39f;border:1px solid #c9c5bb;border-bottom:none"></div>
<div class="a" style="left:290px;top:1041px;width:6px;height:7px;background:#a3a39f;border:1px solid #c9c5bb;border-bottom:none"></div>
<div class="a" style="left:362px;top:1041px;width:59px;height:7px;background:#b9b9b6;border:1px solid #f2f2f2;border-bottom:none"></div>
<div class="a" style="left:315px;top:1045px;width:28px;height:3px;background:#0a0a0a;border:2px solid #18c8f0;border-bottom:none"></div>
<div class="a" style="left:377px;top:1045px;width:28px;height:3px;background:#0a0a0a;border:2px solid #c084ff;border-bottom:none"></div>
<div class="a" style="left:76px;top:1044px;width:20px;height:8px;border-radius:50%;border-top:3px solid #f0c020;transform:rotate(-12deg)"></div>
<div class="a" style="left:126px;top:1046px;width:14px;height:2px;background:#e8c040;"></div>
<div class="a" style="left:213px;top:1045px;width:4px;height:3px;background:#e83030;"></div>
<div class="a" style="left:258px;top:1044px;width:18px;height:8px;border-radius:50%;border-top:3px solid #58c030"></div>
<div class="a" style="left:262px;top:1046px;width:10px;height:4px;border-radius:50%;background:#f4f4f4"></div>
<div class="a" style="left:24px;top:1045px;width:14px;height:5px;background:#e8e8e8;transform:skewY(-12deg)"></div>
</body></html>
